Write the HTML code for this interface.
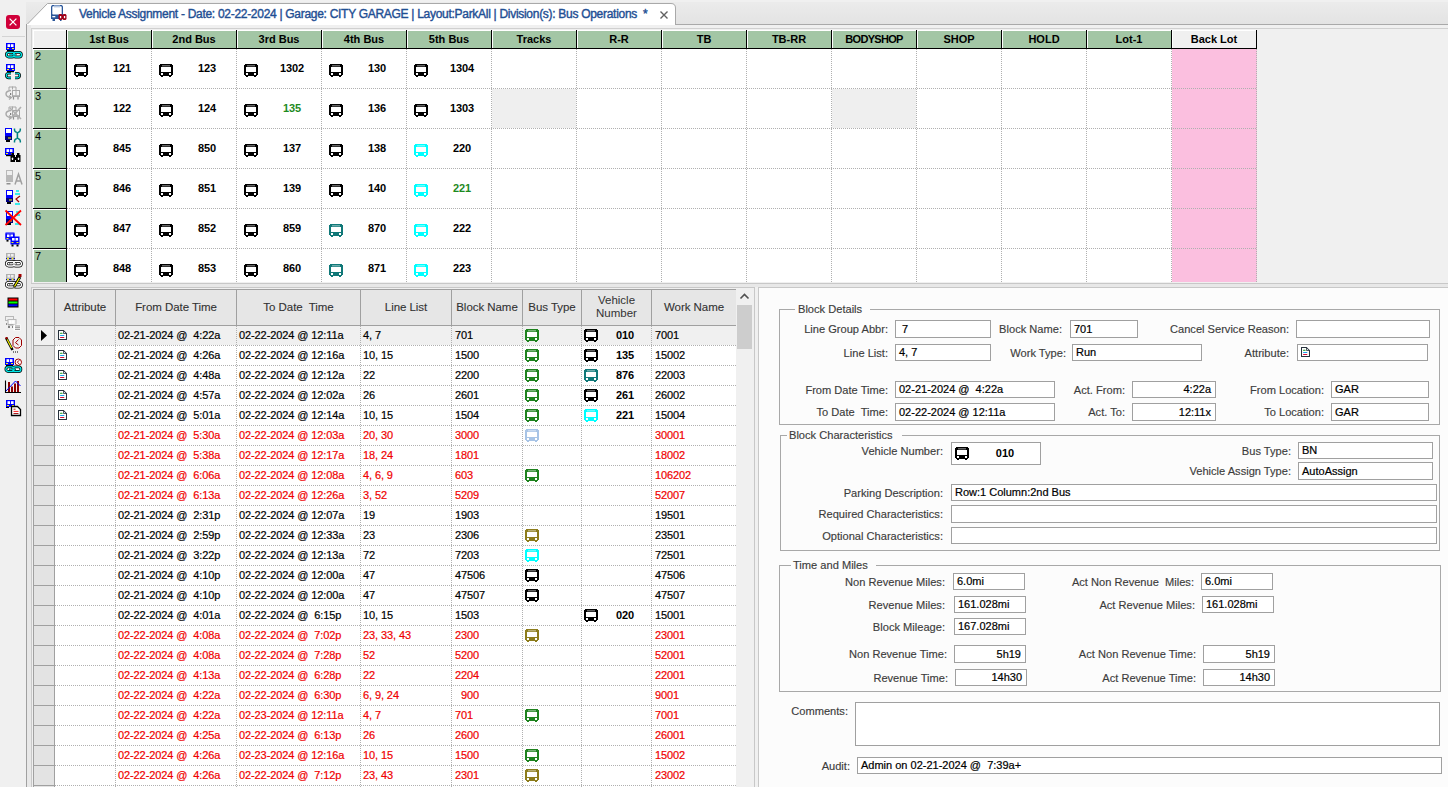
<!DOCTYPE html><html><head><meta charset="utf-8"><style>
html,body{margin:0;padding:0;width:1448px;height:787px;overflow:hidden;background:#f0f0f0}
body{position:relative;font-family:"Liberation Sans",sans-serif}
div{position:absolute}
</style></head><body>
<div style="left:0px;top:0px;width:1448px;height:787px;background:#f0f0f0"></div>
<div style="left:26px;top:0px;width:1422px;height:24px;background:linear-gradient(#ececec,#e3e3e3)"></div>
<div style="left:0px;top:0px;width:1448px;height:2px;background:#f0f0f0"></div>
<div style="left:26px;top:24px;width:1422px;height:1px;background:#a9a9a9"></div>
<svg style="position:absolute;left:0px;top:0px" width="700" height="26" viewBox="0 0 700 26"><path d="M26.5 25 L47.5 3.5 H671 Q675.5 3.5 675.5 8 V25" fill="#fff" stroke="#a9a9a9" stroke-width="1"/></svg>
<div style="left:27px;top:24px;width:648px;height:1px;background:#fff"></div>
<div style="left:26px;top:24px;width:1px;height:763px;background:#a0a0a0"></div>
<div style="left:27px;top:25px;width:4px;height:762px;background:#e8e8e8"></div>
<svg style="position:absolute;left:51px;top:5px" width="17" height="17" viewBox="0 0 17 17"><path fill="#2b579a" d="M1.2 0H10.8L12 1.2V14H0V1.2Z"/><rect x="1.3" y="1.3" width="9.4" height="8.2" rx="0.8" fill="#fff"/><rect x="3" y="0.4" width="6" height="2" fill="#b4c6e0"/><rect x="1.3" y="11" width="3" height="1.3" fill="#fff"/><rect x="1.5" y="14" width="2.5" height="2" fill="#2b579a"/><rect x="9" y="14" width="1.5" height="2" fill="#2b579a"/><path d="M8.5 9H10.5L11.5 10V14L10.5 15H8.5L7.5 14V10Z M12.5 9H14.5L15.5 10V14L14.5 15H12.5L11.5 14V10Z" fill="#a0001a"/><rect x="8.9" y="11" width="1.3" height="2.2" fill="#fff"/><rect x="12.9" y="11" width="1.3" height="2.2" fill="#fff"/></svg>
<div style="left:79px;top:4.8px;height:18px;line-height:18px;text-align:left;white-space:pre;font-size:12px;color:#1f4f94;letter-spacing:-0.29px;-webkit-text-stroke:0.4px #1f4f94">Vehicle Assignment - Date: 02-22-2024 | Garage: CITY GARAGE | Layout:ParkAll | Division(s): Bus Operations  *</div>
<svg style="position:absolute;left:659px;top:10px" width="10" height="10" viewBox="0 0 10 10"><path d="M1.5 1.5L8.5 8.5M8.5 1.5L1.5 8.5" stroke="#606060" stroke-width="1.4"/></svg>
<div style="left:6px;top:15px;width:14px;height:14px;background:#d0003a;border-radius:3px"></div>
<svg style="position:absolute;left:6px;top:15px" width="14" height="14" viewBox="0 0 14 14"><path d="M3.6 3.6L10.4 10.4M10.4 3.6L3.6 10.4" stroke="#fff" stroke-width="1.3"/></svg>
<div style="left:2px;top:36px;width:23px;height:1px;background:#d4d4d4"></div>
<svg style="position:absolute;left:5px;top:43px;overflow:visible" width="17" height="16" viewBox="0 0 17 16"><rect x="1" y="0" width="9" height="7" fill="#0000ff"/><rect x="2.5" y="1.2" width="2.6" height="2.8" fill="#fff"/><rect x="5.9" y="1.2" width="2.6" height="2.8" fill="#fff"/><rect x="2" y="5" width="2" height="1" fill="#ffff00"/><rect x="7" y="5" width="2" height="1" fill="#ffff00"/><rect x="2" y="7" width="7" height="1.2" fill="#000"/><rect x="1.4" y="9.4" width="8" height="4.6" rx="2.3" fill="#fff" stroke="#000" stroke-width="2.8"/><rect x="8.4" y="9.4" width="8" height="4.6" rx="2.3" fill="#fff" stroke="#000" stroke-width="2.8"/><rect x="1.4" y="9.4" width="8" height="4.6" rx="2.3" fill="none" stroke="#00e8e8" stroke-width="1.3"/><rect x="8.4" y="9.4" width="8" height="4.6" rx="2.3" fill="none" stroke="#00e8e8" stroke-width="1.3"/><rect x="4.5" y="11.1" width="7" height="1.3" fill="#000"/><rect x="5" y="11.2" width="6" height="1.1" fill="#00e8e8"/></svg>
<svg style="position:absolute;left:5px;top:64px;overflow:visible" width="17" height="16" viewBox="0 0 17 16"><rect x="1" y="0" width="9" height="7" fill="#0000ff"/><rect x="2.5" y="1.2" width="2.6" height="2.8" fill="#fff"/><rect x="5.9" y="1.2" width="2.6" height="2.8" fill="#fff"/><rect x="2" y="5" width="2" height="1" fill="#ffff00"/><rect x="7" y="5" width="2" height="1" fill="#ffff00"/><rect x="2" y="7" width="7" height="1.2" fill="#000"/><path d="M6 9.3H3.6A2.3 2.3 0 0 0 3.6 13.9H6M10 9.3H12.4A2.3 2.3 0 0 1 12.4 13.9H10" fill="none" stroke="#000" stroke-width="2.6"/><path d="M6 9.3H3.6A2.3 2.3 0 0 0 3.6 13.9H6M10 9.3H12.4A2.3 2.3 0 0 1 12.4 13.9H10" fill="none" stroke="#00e8e8" stroke-width="1.1"/></svg>
<svg style="position:absolute;left:5px;top:86px;overflow:visible" width="17" height="16" viewBox="0 0 17 16"><path d="M4 4V1H11V4" fill="none" stroke="#a8a8a8" stroke-width="1"/><path d="M7.5 0.5V3.5" stroke="#a8a8a8"/><rect x="7.5" y="4.5" width="7" height="5.5" fill="#f4f4f4" stroke="#a8a8a8" stroke-width="1"/><path d="M11 5V9.5" stroke="#a8a8a8"/><rect x="5" y="7" width="1.2" height="2" fill="#808080"/><rect x="7" y="9.5" width="8" height="1.5" fill="#a8a8a8"/><path d="M8.5 11V13.5M13 11V13.5" stroke="#909090" stroke-width="1.2"/><path d="M6 4.5Q1 5 1 8Q1 11 6 11.5" fill="none" stroke="#a8a8a8" stroke-width="1.4"/><path d="M4 9.5L6.5 11.5L4 13.5" fill="none" stroke="#a8a8a8" stroke-width="1.2"/></svg>
<svg style="position:absolute;left:5px;top:106px;overflow:visible" width="17" height="16" viewBox="0 0 17 16"><path d="M4 4V1H11V4" fill="none" stroke="#a8a8a8" stroke-width="1"/><path d="M7.5 0.5V3.5" stroke="#a8a8a8"/><rect x="7.5" y="4.5" width="7" height="5.5" fill="#f4f4f4" stroke="#a8a8a8" stroke-width="1"/><path d="M11 5V9.5" stroke="#a8a8a8"/><rect x="5" y="7" width="1.2" height="2" fill="#808080"/><rect x="7" y="9.5" width="8" height="1.5" fill="#a8a8a8"/><path d="M8.5 11V13.5M13 11V13.5" stroke="#909090" stroke-width="1.2"/><path d="M6 4.5Q1 5 1 8Q1 11 6 11.5" fill="none" stroke="#a8a8a8" stroke-width="1.4"/><path d="M4 9.5L6.5 11.5L4 13.5" fill="none" stroke="#a8a8a8" stroke-width="1.2"/><path d="M5 2L16 13M16 1L6 12" stroke="#b0b0b0" stroke-width="1.6"/></svg>
<svg style="position:absolute;left:5px;top:128px;overflow:visible" width="17" height="16" viewBox="0 0 17 16"><rect x="0" y="0" width="7" height="12" fill="#0000ff"/><rect x="1" y="1" width="5" height="4" fill="#fff"/><rect x="0" y="8" width="7" height="4" fill="#000080"/><rect x="3" y="9.5" width="3" height="1" fill="#ffff00"/><rect x="1" y="12" width="4" height="2" fill="#000"/><path d="M9.5 0.5V2Q9.5 3.8 11.8 4.5M15.3 0.5V2Q15.3 3.8 13 4.5M11.8 10.5Q9.5 11.2 9.5 13V14.5M13 10.5Q15.3 11.2 15.3 13V14.5" fill="none" stroke="#008080" stroke-width="1.5"/><rect x="11.6" y="4" width="1.6" height="7" fill="#008080"/></svg>
<svg style="position:absolute;left:5px;top:148px;overflow:visible" width="17" height="16" viewBox="0 0 17 16"><rect x="0" y="0" width="9" height="7" fill="#0000ff"/><rect x="1.5" y="1.2" width="2.6" height="2.8" fill="#fff"/><rect x="4.9" y="1.2" width="2.6" height="2.8" fill="#fff"/><rect x="1" y="5" width="2" height="1" fill="#ffff00"/><rect x="6" y="5" width="2" height="1" fill="#ffff00"/><rect x="1" y="7" width="7" height="1.2" fill="#000"/><path d="M6.5 5H9V7H10V9H11V7H12V5H14.5V7H15.5V14H11V12H10V14H5.5V7H6.5Z" fill="#000"/><rect x="6.8" y="9.5" width="1.4" height="2.6" rx=".7" fill="#fff"/><rect x="12.8" y="9.5" width="1.4" height="2.6" rx=".7" fill="#fff"/></svg>
<svg style="position:absolute;left:5px;top:170px;overflow:visible" width="17" height="16" viewBox="0 0 17 16"><rect x="1" y="0" width="7" height="12" fill="#b8b8b8"/><rect x="2" y="1" width="5" height="4" fill="#eee"/><rect x="1.5" y="13" width="4" height="1.5" fill="#909090"/><path d="M10 14.5L13.5 4L17 14.5M11 11H16" fill="none" stroke="#a0a0a0" stroke-width="1.5"/></svg>
<svg style="position:absolute;left:5px;top:190px;overflow:visible" width="17" height="16" viewBox="0 0 17 16"><rect x="1" y="0" width="7" height="12" fill="#0000ff"/><rect x="2" y="1" width="5" height="4" fill="#fff"/><rect x="1" y="8" width="7" height="4" fill="#000080"/><rect x="4" y="9.5" width="3" height="1" fill="#ffff00"/><rect x="2" y="12" width="4" height="2" fill="#000"/><path d="M11 1H14M10 4H15M10 14H15" stroke="#00e8e8" stroke-width="1.6"/><path d="M15 6L11 9L14 12" fill="none" stroke="#a00000" stroke-width="1.2"/></svg>
<svg style="position:absolute;left:5px;top:210px;overflow:visible" width="17" height="16" viewBox="0 0 17 16"><rect x="1" y="1" width="7" height="12" fill="#0000ff"/><rect x="2" y="2" width="5" height="4" fill="#fff"/><rect x="1" y="9" width="7" height="4" fill="#000080"/><rect x="4" y="10.5" width="3" height="1" fill="#ffff00"/><rect x="2" y="13" width="4" height="2" fill="#000"/><path d="M11 2H14M10 5H15M10 14H15" stroke="#00e8e8" stroke-width="1.6"/><path d="M0.5 0.5L16 15M16 0.5L0.5 15" stroke="#ff0000" stroke-width="1.8"/></svg>
<svg style="position:absolute;left:5px;top:233px;overflow:visible" width="17" height="16" viewBox="0 0 17 16"><rect x="1" y="0" width="8" height="6" fill="none" stroke="#0000ff" stroke-width="1"/><rect x="0.5" y="0.5" width="9" height="6" fill="#0000ff"/><rect x="2" y="1.5" width="2.5" height="2.5" fill="#fff"/><rect x="5.5" y="1.5" width="2.5" height="2.5" fill="#fff"/><rect x="1.5" y="5" width="2" height="1" fill="#ffff00"/><rect x="1.5" y="7" width="2" height="1.6" fill="#000"/><rect x="5.5" y="3.5" width="9" height="8" fill="#0000ff"/><rect x="7" y="5" width="2.6" height="2.6" fill="#fff"/><rect x="10.5" y="5" width="2.6" height="2.6" fill="#fff"/><rect x="6.5" y="9" width="2" height="1" fill="#ffff00"/><rect x="11.5" y="9" width="2" height="1" fill="#ffff00"/><rect x="6.5" y="11.5" width="2" height="2" fill="#000"/><rect x="11.5" y="11.5" width="2" height="2" fill="#000"/></svg>
<svg style="position:absolute;left:5px;top:253px;overflow:visible" width="17" height="16" viewBox="0 0 17 16"><rect x="1" y="0" width="9" height="5" fill="#b0b0b0"/><rect x="2.5" y="1" width="2.6" height="2.6" fill="#eee"/><rect x="6" y="1" width="2.6" height="2.6" fill="#eee"/><rect x="1" y="5" width="9" height="1.3" fill="#0000c0"/><rect x="2" y="5" width="2" height="1.3" fill="#ffff00"/><rect x="6.5" y="5" width="2" height="1.3" fill="#ffff00"/><rect x="1.4" y="8.4" width="8" height="4.6" rx="2.3" fill="#fff" stroke="#000" stroke-width="2.8"/><rect x="8.4" y="8.4" width="8" height="4.6" rx="2.3" fill="#fff" stroke="#000" stroke-width="2.8"/><rect x="1.4" y="8.4" width="8" height="4.6" rx="2.3" fill="none" stroke="#fff" stroke-width="1.3"/><rect x="8.4" y="8.4" width="8" height="4.6" rx="2.3" fill="none" stroke="#fff" stroke-width="1.3"/><rect x="4.5" y="10.1" width="7" height="1.3" fill="#000"/><rect x="5" y="10.2" width="6" height="1.1" fill="#fff"/></svg>
<svg style="position:absolute;left:5px;top:274px;overflow:visible" width="17" height="16" viewBox="0 0 17 16"><rect x="1" y="0" width="9" height="5" fill="#b0b0b0"/><rect x="2.5" y="1" width="2.6" height="2.6" fill="#eee"/><rect x="6" y="1" width="2.6" height="2.6" fill="#eee"/><rect x="1" y="5" width="9" height="1.3" fill="#0000c0"/><rect x="2" y="5" width="2" height="1.3" fill="#ffff00"/><rect x="6.5" y="5" width="2" height="1.3" fill="#ffff00"/><rect x="1.4" y="8.4" width="8" height="4.6" rx="2.3" fill="#fff" stroke="#000" stroke-width="2.8"/><rect x="8.4" y="8.4" width="8" height="4.6" rx="2.3" fill="#fff" stroke="#000" stroke-width="2.8"/><rect x="1.4" y="8.4" width="8" height="4.6" rx="2.3" fill="none" stroke="#fff" stroke-width="1.3"/><rect x="8.4" y="8.4" width="8" height="4.6" rx="2.3" fill="none" stroke="#fff" stroke-width="1.3"/><rect x="4.5" y="10.1" width="7" height="1.3" fill="#000"/><rect x="5" y="10.2" width="6" height="1.1" fill="#fff"/><path d="M9 13L15 3" stroke="#000" stroke-width="2.8"/><path d="M9.5 12.5L14.5 4" stroke="#ffff00" stroke-width="1.2"/><rect x="13.5" y="0" width="3" height="3" fill="#a00000"/></svg>
<svg style="position:absolute;left:5px;top:297px;overflow:visible" width="17" height="16" viewBox="0 0 17 16"><rect x="2.5" y="0.5" width="11" height="10" fill="#000"/><rect x="3.5" y="1.5" width="9" height="2" fill="#ff0000"/><rect x="3.5" y="4.5" width="9" height="2" fill="#00ff00"/><rect x="3.5" y="7.3" width="9" height="2" fill="#0000ff"/></svg>
<svg style="position:absolute;left:5px;top:316px;overflow:visible" width="17" height="16" viewBox="0 0 17 16"><rect x="0.5" y="0.5" width="8" height="4" fill="none" stroke="#b8b8b8"/><rect x="3" y="3.5" width="8" height="5" fill="#f0f0f0" stroke="#b8b8b8"/><rect x="4" y="4.5" width="2.5" height="3" fill="#fff"/><rect x="7" y="4.5" width="2.5" height="3" fill="#fff"/><rect x="1" y="7" width="1" height="2" fill="#909090"/><rect x="3" y="8.5" width="8" height="1" fill="#a0a0a0"/><rect x="3" y="10" width="2" height="2" fill="#808080"/><rect x="7" y="10" width="1" height="2" fill="#808080"/><rect x="8.5" y="8.5" width="7" height="6" fill="#fff"/><path d="M10 10H15M10 11.7H15M10 13.4H15" stroke="#909090" stroke-width="1"/></svg>
<svg style="position:absolute;left:5px;top:337px;overflow:visible" width="17" height="16" viewBox="0 0 17 16"><path d="M10.5 0.5H14L16.5 3V8.5L14 11H10.5L8 8.5V3Z" fill="none" stroke="#a00000" stroke-width="1"/><path d="M13.5 2.5L10.5 5.7L13.5 8" fill="none" stroke="#a00000" stroke-width="1"/><path d="M1.2 0.8L7.5 13" stroke="#000" stroke-width="2.6"/><path d="M2.2 2.5L6.6 11" stroke="#ffff00" stroke-width="1.1"/><rect x="0.5" y="0" width="2" height="2" fill="#a00000"/><rect x="8" y="14.5" width="1" height="1" fill="#000"/><rect x="10" y="14.5" width="1" height="1" fill="#000"/><rect x="12" y="14.5" width="1" height="1" fill="#000"/></svg>
<svg style="position:absolute;left:5px;top:358px;overflow:visible" width="17" height="16" viewBox="0 0 17 16"><rect x="0" y="0" width="9" height="7" fill="#0000ff"/><rect x="1.5" y="1.2" width="2.6" height="2.8" fill="#fff"/><rect x="4.9" y="1.2" width="2.6" height="2.8" fill="#fff"/><rect x="1" y="5" width="2" height="1" fill="#ffff00"/><rect x="6" y="5" width="2" height="1" fill="#ffff00"/><rect x="1" y="7" width="7" height="1.2" fill="#000"/><circle cx="13.3" cy="4.2" r="3.2" fill="#fff" stroke="#a00000" stroke-width="1"/><path d="M14.3 2.2L12.3 4.2L14.6 6.3" fill="none" stroke="#a00000"/><rect x="0.8999999999999999" y="8.9" width="8" height="4.6" rx="2.3" fill="#fff" stroke="#000" stroke-width="2.8"/><rect x="7.9" y="8.9" width="8" height="4.6" rx="2.3" fill="#fff" stroke="#000" stroke-width="2.8"/><rect x="0.8999999999999999" y="8.9" width="8" height="4.6" rx="2.3" fill="none" stroke="#00e8e8" stroke-width="1.3"/><rect x="7.9" y="8.9" width="8" height="4.6" rx="2.3" fill="none" stroke="#00e8e8" stroke-width="1.3"/><rect x="4.0" y="10.6" width="7" height="1.3" fill="#000"/><rect x="4.5" y="10.7" width="6" height="1.1" fill="#00e8e8"/></svg>
<svg style="position:absolute;left:5px;top:380px;overflow:visible" width="17" height="16" viewBox="0 0 17 16"><path d="M0.5 0.5V12.5H16" fill="none" stroke="#000" stroke-width="1.1"/><rect x="3" y="2" width="2" height="10" fill="#8b0000"/><rect x="6" y="6.5" width="2" height="5.5" fill="#8b0000"/><rect x="9" y="3.5" width="2" height="8.5" fill="#8b0000"/><rect x="12" y="1" width="2" height="11" fill="#8b0000"/><path d="M1 11L10.5 1L15.5 6" fill="none" stroke="#0000ff" stroke-width="1"/></svg>
<svg style="position:absolute;left:5px;top:400px;overflow:visible" width="17" height="16" viewBox="0 0 17 16"><rect x="1" y="0" width="9" height="7" fill="#0000ff"/><rect x="2.5" y="1.2" width="2.6" height="2.8" fill="#fff"/><rect x="6" y="1.2" width="2.6" height="2.8" fill="#fff"/><rect x="2" y="5" width="2" height="1" fill="#ffff00"/><rect x="7" y="5" width="2" height="1" fill="#ffff00"/><rect x="1" y="7" width="3" height="1" fill="#000"/><path d="M6.5 6.5H12.5L15.5 9.5V15.5H6.5Z" fill="#fff" stroke="#000" stroke-width="1.3"/><path d="M8.5 9.2H10.5" stroke="#a00000" stroke-width=".9"/><path d="M8.5 11.4H13.5" stroke="#ff0000" stroke-width=".9"/><path d="M8.5 13.5H13.5" stroke="#a00000" stroke-width=".9"/></svg>
<div style="left:31px;top:28px;width:1417px;height:1px;background:#d0d0d0"></div>
<div style="left:31px;top:28px;width:1px;height:255px;background:#d0d0d0"></div>
<div style="left:32px;top:29px;width:1416px;height:254px;background:#f0f0f0"></div>
<div style="left:33px;top:30px;width:33px;height:18px;background:#f0f0f0;border-top:1px solid #fff;border-left:1px solid #fff;box-sizing:border-box"></div>
<div style="left:33px;top:48px;width:1224px;height:1px;background:#000"></div>
<div style="left:66px;top:30px;width:1px;height:252px;background:#000"></div>
<div style="left:67px;top:30px;width:84px;height:18px;background:#a3c6a5;border-top:1px solid #fff;border-left:1px solid #fff;box-sizing:border-box"></div>
<div style="left:151px;top:30px;width:1px;height:18px;background:#000"></div>
<div style="left:67px;top:30px;width:84px;height:19px;line-height:19px;text-align:center;white-space:pre;font-size:11px;font-weight:bold;color:#000;letter-spacing:0">1st Bus</div>
<div style="left:152px;top:30px;width:84px;height:18px;background:#a3c6a5;border-top:1px solid #fff;border-left:1px solid #fff;box-sizing:border-box"></div>
<div style="left:236px;top:30px;width:1px;height:18px;background:#000"></div>
<div style="left:152px;top:30px;width:84px;height:19px;line-height:19px;text-align:center;white-space:pre;font-size:11px;font-weight:bold;color:#000;letter-spacing:0">2nd Bus</div>
<div style="left:237px;top:30px;width:84px;height:18px;background:#a3c6a5;border-top:1px solid #fff;border-left:1px solid #fff;box-sizing:border-box"></div>
<div style="left:321px;top:30px;width:1px;height:18px;background:#000"></div>
<div style="left:237px;top:30px;width:84px;height:19px;line-height:19px;text-align:center;white-space:pre;font-size:11px;font-weight:bold;color:#000;letter-spacing:0">3rd Bus</div>
<div style="left:322px;top:30px;width:84px;height:18px;background:#a3c6a5;border-top:1px solid #fff;border-left:1px solid #fff;box-sizing:border-box"></div>
<div style="left:406px;top:30px;width:1px;height:18px;background:#000"></div>
<div style="left:322px;top:30px;width:84px;height:19px;line-height:19px;text-align:center;white-space:pre;font-size:11px;font-weight:bold;color:#000;letter-spacing:0">4th Bus</div>
<div style="left:407px;top:30px;width:84px;height:18px;background:#a3c6a5;border-top:1px solid #fff;border-left:1px solid #fff;box-sizing:border-box"></div>
<div style="left:491px;top:30px;width:1px;height:18px;background:#000"></div>
<div style="left:407px;top:30px;width:84px;height:19px;line-height:19px;text-align:center;white-space:pre;font-size:11px;font-weight:bold;color:#000;letter-spacing:0">5th Bus</div>
<div style="left:492px;top:30px;width:84px;height:18px;background:#a3c6a5;border-top:1px solid #fff;border-left:1px solid #fff;box-sizing:border-box"></div>
<div style="left:576px;top:30px;width:1px;height:18px;background:#000"></div>
<div style="left:492px;top:30px;width:84px;height:19px;line-height:19px;text-align:center;white-space:pre;font-size:11px;font-weight:bold;color:#000;letter-spacing:0">Tracks</div>
<div style="left:577px;top:30px;width:84px;height:18px;background:#a3c6a5;border-top:1px solid #fff;border-left:1px solid #fff;box-sizing:border-box"></div>
<div style="left:661px;top:30px;width:1px;height:18px;background:#000"></div>
<div style="left:577px;top:30px;width:84px;height:19px;line-height:19px;text-align:center;white-space:pre;font-size:11px;font-weight:bold;color:#000;letter-spacing:0">R-R</div>
<div style="left:662px;top:30px;width:84px;height:18px;background:#a3c6a5;border-top:1px solid #fff;border-left:1px solid #fff;box-sizing:border-box"></div>
<div style="left:746px;top:30px;width:1px;height:18px;background:#000"></div>
<div style="left:662px;top:30px;width:84px;height:19px;line-height:19px;text-align:center;white-space:pre;font-size:11px;font-weight:bold;color:#000;letter-spacing:0">TB</div>
<div style="left:747px;top:30px;width:84px;height:18px;background:#a3c6a5;border-top:1px solid #fff;border-left:1px solid #fff;box-sizing:border-box"></div>
<div style="left:831px;top:30px;width:1px;height:18px;background:#000"></div>
<div style="left:747px;top:30px;width:84px;height:19px;line-height:19px;text-align:center;white-space:pre;font-size:11px;font-weight:bold;color:#000;letter-spacing:0">TB-RR</div>
<div style="left:832px;top:30px;width:84px;height:18px;background:#a3c6a5;border-top:1px solid #fff;border-left:1px solid #fff;box-sizing:border-box"></div>
<div style="left:916px;top:30px;width:1px;height:18px;background:#000"></div>
<div style="left:832px;top:30px;width:84px;height:19px;line-height:19px;text-align:center;white-space:pre;font-size:11px;font-weight:bold;color:#000;letter-spacing:-0.7px">BODYSHOP</div>
<div style="left:917px;top:30px;width:84px;height:18px;background:#a3c6a5;border-top:1px solid #fff;border-left:1px solid #fff;box-sizing:border-box"></div>
<div style="left:1001px;top:30px;width:1px;height:18px;background:#000"></div>
<div style="left:917px;top:30px;width:84px;height:19px;line-height:19px;text-align:center;white-space:pre;font-size:11px;font-weight:bold;color:#000;letter-spacing:0">SHOP</div>
<div style="left:1002px;top:30px;width:84px;height:18px;background:#a3c6a5;border-top:1px solid #fff;border-left:1px solid #fff;box-sizing:border-box"></div>
<div style="left:1086px;top:30px;width:1px;height:18px;background:#000"></div>
<div style="left:1002px;top:30px;width:84px;height:19px;line-height:19px;text-align:center;white-space:pre;font-size:11px;font-weight:bold;color:#000;letter-spacing:0">HOLD</div>
<div style="left:1087px;top:30px;width:84px;height:18px;background:#a3c6a5;border-top:1px solid #fff;border-left:1px solid #fff;box-sizing:border-box"></div>
<div style="left:1171px;top:30px;width:1px;height:18px;background:#000"></div>
<div style="left:1087px;top:30px;width:84px;height:19px;line-height:19px;text-align:center;white-space:pre;font-size:11px;font-weight:bold;color:#000;letter-spacing:0">Lot-1</div>
<div style="left:1172px;top:30px;width:84px;height:18px;background:#f0f0f0;border-top:1px solid #fff;border-left:1px solid #fff;box-sizing:border-box"></div>
<div style="left:1256px;top:30px;width:1px;height:18px;background:#000"></div>
<div style="left:1172px;top:30px;width:84px;height:19px;line-height:19px;text-align:center;white-space:pre;font-size:11px;font-weight:bold;color:#000;letter-spacing:0">Back Lot</div>
<div style="left:33px;top:49px;width:33px;height:39px;background:#a3c6a5;border-top:1px solid #fff;border-left:1px solid #fff;box-sizing:border-box"></div>
<div style="left:33px;top:88px;width:33px;height:1px;background:#000"></div>
<div style="left:35px;top:50px;height:12px;line-height:12px;text-align:left;white-space:pre;font-size:11px;color:#000">2</div>
<div style="left:67px;top:49px;width:1105px;height:40px;background:#fff"></div>
<div style="left:1172px;top:49px;width:85px;height:40px;background:#fbbfdf"></div>
<div style="left:67px;top:88px;width:1190px;height:1px;background:repeating-linear-gradient(90deg,#b0b0b0 0 1px,transparent 1px 2px)"></div>
<svg style="position:absolute;left:74px;top:64px" width="14" height="13" viewBox="0 0 14 13"><path fill="#000" d="M1 0H13V1H14V11H13V12H12V13H10V12H4V13H2V12H1V11H0V1H1Z"/><rect x="2" y="3" width="10" height="5" fill="#fff"/><rect x="3" y="1.4" width="8" height="0.9" fill="#fff" opacity=".65"/><rect x="2" y="9" width="2" height="2" fill="#fff"/><rect x="10" y="9" width="2" height="2" fill="#fff"/></svg>
<div style="left:90px;top:60px;width:64px;height:16px;line-height:16px;text-align:center;white-space:pre;font-size:11px;font-weight:bold;color:#000;letter-spacing:-0.1px">121</div>
<svg style="position:absolute;left:159px;top:64px" width="14" height="13" viewBox="0 0 14 13"><path fill="#000" d="M1 0H13V1H14V11H13V12H12V13H10V12H4V13H2V12H1V11H0V1H1Z"/><rect x="2" y="3" width="10" height="5" fill="#fff"/><rect x="3" y="1.4" width="8" height="0.9" fill="#fff" opacity=".65"/><rect x="2" y="9" width="2" height="2" fill="#fff"/><rect x="10" y="9" width="2" height="2" fill="#fff"/></svg>
<div style="left:175px;top:60px;width:64px;height:16px;line-height:16px;text-align:center;white-space:pre;font-size:11px;font-weight:bold;color:#000;letter-spacing:-0.1px">123</div>
<svg style="position:absolute;left:244px;top:64px" width="14" height="13" viewBox="0 0 14 13"><path fill="#000" d="M1 0H13V1H14V11H13V12H12V13H10V12H4V13H2V12H1V11H0V1H1Z"/><rect x="2" y="3" width="10" height="5" fill="#fff"/><rect x="3" y="1.4" width="8" height="0.9" fill="#fff" opacity=".65"/><rect x="2" y="9" width="2" height="2" fill="#fff"/><rect x="10" y="9" width="2" height="2" fill="#fff"/></svg>
<div style="left:260px;top:60px;width:64px;height:16px;line-height:16px;text-align:center;white-space:pre;font-size:11px;font-weight:bold;color:#000;letter-spacing:-0.1px">1302</div>
<svg style="position:absolute;left:329px;top:64px" width="14" height="13" viewBox="0 0 14 13"><path fill="#000" d="M1 0H13V1H14V11H13V12H12V13H10V12H4V13H2V12H1V11H0V1H1Z"/><rect x="2" y="3" width="10" height="5" fill="#fff"/><rect x="3" y="1.4" width="8" height="0.9" fill="#fff" opacity=".65"/><rect x="2" y="9" width="2" height="2" fill="#fff"/><rect x="10" y="9" width="2" height="2" fill="#fff"/></svg>
<div style="left:345px;top:60px;width:64px;height:16px;line-height:16px;text-align:center;white-space:pre;font-size:11px;font-weight:bold;color:#000;letter-spacing:-0.1px">130</div>
<svg style="position:absolute;left:414px;top:64px" width="14" height="13" viewBox="0 0 14 13"><path fill="#000" d="M1 0H13V1H14V11H13V12H12V13H10V12H4V13H2V12H1V11H0V1H1Z"/><rect x="2" y="3" width="10" height="5" fill="#fff"/><rect x="3" y="1.4" width="8" height="0.9" fill="#fff" opacity=".65"/><rect x="2" y="9" width="2" height="2" fill="#fff"/><rect x="10" y="9" width="2" height="2" fill="#fff"/></svg>
<div style="left:430px;top:60px;width:64px;height:16px;line-height:16px;text-align:center;white-space:pre;font-size:11px;font-weight:bold;color:#000;letter-spacing:-0.1px">1304</div>
<div style="left:33px;top:89px;width:33px;height:39px;background:#a3c6a5;border-top:1px solid #fff;border-left:1px solid #fff;box-sizing:border-box"></div>
<div style="left:33px;top:128px;width:33px;height:1px;background:#000"></div>
<div style="left:35px;top:90px;height:12px;line-height:12px;text-align:left;white-space:pre;font-size:11px;color:#000">3</div>
<div style="left:67px;top:89px;width:1105px;height:40px;background:#fff"></div>
<div style="left:1172px;top:89px;width:85px;height:40px;background:#fbbfdf"></div>
<div style="left:492px;top:89px;width:84px;height:39px;background:#efefef"></div>
<div style="left:832px;top:89px;width:84px;height:39px;background:#efefef"></div>
<div style="left:67px;top:128px;width:1190px;height:1px;background:repeating-linear-gradient(90deg,#b0b0b0 0 1px,transparent 1px 2px)"></div>
<svg style="position:absolute;left:74px;top:104px" width="14" height="13" viewBox="0 0 14 13"><path fill="#000" d="M1 0H13V1H14V11H13V12H12V13H10V12H4V13H2V12H1V11H0V1H1Z"/><rect x="2" y="3" width="10" height="5" fill="#fff"/><rect x="3" y="1.4" width="8" height="0.9" fill="#fff" opacity=".65"/><rect x="2" y="9" width="2" height="2" fill="#fff"/><rect x="10" y="9" width="2" height="2" fill="#fff"/></svg>
<div style="left:90px;top:100px;width:64px;height:16px;line-height:16px;text-align:center;white-space:pre;font-size:11px;font-weight:bold;color:#000;letter-spacing:-0.1px">122</div>
<svg style="position:absolute;left:159px;top:104px" width="14" height="13" viewBox="0 0 14 13"><path fill="#000" d="M1 0H13V1H14V11H13V12H12V13H10V12H4V13H2V12H1V11H0V1H1Z"/><rect x="2" y="3" width="10" height="5" fill="#fff"/><rect x="3" y="1.4" width="8" height="0.9" fill="#fff" opacity=".65"/><rect x="2" y="9" width="2" height="2" fill="#fff"/><rect x="10" y="9" width="2" height="2" fill="#fff"/></svg>
<div style="left:175px;top:100px;width:64px;height:16px;line-height:16px;text-align:center;white-space:pre;font-size:11px;font-weight:bold;color:#000;letter-spacing:-0.1px">124</div>
<svg style="position:absolute;left:244px;top:104px" width="14" height="13" viewBox="0 0 14 13"><path fill="#000" d="M1 0H13V1H14V11H13V12H12V13H10V12H4V13H2V12H1V11H0V1H1Z"/><rect x="2" y="3" width="10" height="5" fill="#fff"/><rect x="3" y="1.4" width="8" height="0.9" fill="#fff" opacity=".65"/><rect x="2" y="9" width="2" height="2" fill="#fff"/><rect x="10" y="9" width="2" height="2" fill="#fff"/></svg>
<div style="left:260px;top:100px;width:64px;height:16px;line-height:16px;text-align:center;white-space:pre;font-size:11px;font-weight:bold;color:#1e8a1e;letter-spacing:-0.1px">135</div>
<svg style="position:absolute;left:329px;top:104px" width="14" height="13" viewBox="0 0 14 13"><path fill="#000" d="M1 0H13V1H14V11H13V12H12V13H10V12H4V13H2V12H1V11H0V1H1Z"/><rect x="2" y="3" width="10" height="5" fill="#fff"/><rect x="3" y="1.4" width="8" height="0.9" fill="#fff" opacity=".65"/><rect x="2" y="9" width="2" height="2" fill="#fff"/><rect x="10" y="9" width="2" height="2" fill="#fff"/></svg>
<div style="left:345px;top:100px;width:64px;height:16px;line-height:16px;text-align:center;white-space:pre;font-size:11px;font-weight:bold;color:#000;letter-spacing:-0.1px">136</div>
<svg style="position:absolute;left:414px;top:104px" width="14" height="13" viewBox="0 0 14 13"><path fill="#000" d="M1 0H13V1H14V11H13V12H12V13H10V12H4V13H2V12H1V11H0V1H1Z"/><rect x="2" y="3" width="10" height="5" fill="#fff"/><rect x="3" y="1.4" width="8" height="0.9" fill="#fff" opacity=".65"/><rect x="2" y="9" width="2" height="2" fill="#fff"/><rect x="10" y="9" width="2" height="2" fill="#fff"/></svg>
<div style="left:430px;top:100px;width:64px;height:16px;line-height:16px;text-align:center;white-space:pre;font-size:11px;font-weight:bold;color:#000;letter-spacing:-0.1px">1303</div>
<div style="left:33px;top:129px;width:33px;height:39px;background:#a3c6a5;border-top:1px solid #fff;border-left:1px solid #fff;box-sizing:border-box"></div>
<div style="left:33px;top:168px;width:33px;height:1px;background:#000"></div>
<div style="left:35px;top:130px;height:12px;line-height:12px;text-align:left;white-space:pre;font-size:11px;color:#000">4</div>
<div style="left:67px;top:129px;width:1105px;height:40px;background:#fff"></div>
<div style="left:1172px;top:129px;width:85px;height:40px;background:#fbbfdf"></div>
<div style="left:67px;top:168px;width:1190px;height:1px;background:repeating-linear-gradient(90deg,#b0b0b0 0 1px,transparent 1px 2px)"></div>
<svg style="position:absolute;left:74px;top:144px" width="14" height="13" viewBox="0 0 14 13"><path fill="#000" d="M1 0H13V1H14V11H13V12H12V13H10V12H4V13H2V12H1V11H0V1H1Z"/><rect x="2" y="3" width="10" height="5" fill="#fff"/><rect x="3" y="1.4" width="8" height="0.9" fill="#fff" opacity=".65"/><rect x="2" y="9" width="2" height="2" fill="#fff"/><rect x="10" y="9" width="2" height="2" fill="#fff"/></svg>
<div style="left:90px;top:140px;width:64px;height:16px;line-height:16px;text-align:center;white-space:pre;font-size:11px;font-weight:bold;color:#000;letter-spacing:-0.1px">845</div>
<svg style="position:absolute;left:159px;top:144px" width="14" height="13" viewBox="0 0 14 13"><path fill="#000" d="M1 0H13V1H14V11H13V12H12V13H10V12H4V13H2V12H1V11H0V1H1Z"/><rect x="2" y="3" width="10" height="5" fill="#fff"/><rect x="3" y="1.4" width="8" height="0.9" fill="#fff" opacity=".65"/><rect x="2" y="9" width="2" height="2" fill="#fff"/><rect x="10" y="9" width="2" height="2" fill="#fff"/></svg>
<div style="left:175px;top:140px;width:64px;height:16px;line-height:16px;text-align:center;white-space:pre;font-size:11px;font-weight:bold;color:#000;letter-spacing:-0.1px">850</div>
<svg style="position:absolute;left:244px;top:144px" width="14" height="13" viewBox="0 0 14 13"><path fill="#000" d="M1 0H13V1H14V11H13V12H12V13H10V12H4V13H2V12H1V11H0V1H1Z"/><rect x="2" y="3" width="10" height="5" fill="#fff"/><rect x="3" y="1.4" width="8" height="0.9" fill="#fff" opacity=".65"/><rect x="2" y="9" width="2" height="2" fill="#fff"/><rect x="10" y="9" width="2" height="2" fill="#fff"/></svg>
<div style="left:260px;top:140px;width:64px;height:16px;line-height:16px;text-align:center;white-space:pre;font-size:11px;font-weight:bold;color:#000;letter-spacing:-0.1px">137</div>
<svg style="position:absolute;left:329px;top:144px" width="14" height="13" viewBox="0 0 14 13"><path fill="#000" d="M1 0H13V1H14V11H13V12H12V13H10V12H4V13H2V12H1V11H0V1H1Z"/><rect x="2" y="3" width="10" height="5" fill="#fff"/><rect x="3" y="1.4" width="8" height="0.9" fill="#fff" opacity=".65"/><rect x="2" y="9" width="2" height="2" fill="#fff"/><rect x="10" y="9" width="2" height="2" fill="#fff"/></svg>
<div style="left:345px;top:140px;width:64px;height:16px;line-height:16px;text-align:center;white-space:pre;font-size:11px;font-weight:bold;color:#000;letter-spacing:-0.1px">138</div>
<svg style="position:absolute;left:414px;top:144px" width="14" height="13" viewBox="0 0 14 13"><path fill="#00ffff" d="M1 0H13V1H14V11H13V12H12V13H10V12H4V13H2V12H1V11H0V1H1Z"/><rect x="2" y="3" width="10" height="5" fill="#fff"/><rect x="3" y="1.4" width="8" height="0.9" fill="#fff" opacity=".65"/><rect x="2" y="9" width="2" height="2" fill="#fff"/><rect x="10" y="9" width="2" height="2" fill="#fff"/></svg>
<div style="left:430px;top:140px;width:64px;height:16px;line-height:16px;text-align:center;white-space:pre;font-size:11px;font-weight:bold;color:#000;letter-spacing:-0.1px">220</div>
<div style="left:33px;top:169px;width:33px;height:39px;background:#a3c6a5;border-top:1px solid #fff;border-left:1px solid #fff;box-sizing:border-box"></div>
<div style="left:33px;top:208px;width:33px;height:1px;background:#000"></div>
<div style="left:35px;top:170px;height:12px;line-height:12px;text-align:left;white-space:pre;font-size:11px;color:#000">5</div>
<div style="left:67px;top:169px;width:1105px;height:40px;background:#fff"></div>
<div style="left:1172px;top:169px;width:85px;height:40px;background:#fbbfdf"></div>
<div style="left:67px;top:208px;width:1190px;height:1px;background:repeating-linear-gradient(90deg,#b0b0b0 0 1px,transparent 1px 2px)"></div>
<svg style="position:absolute;left:74px;top:184px" width="14" height="13" viewBox="0 0 14 13"><path fill="#000" d="M1 0H13V1H14V11H13V12H12V13H10V12H4V13H2V12H1V11H0V1H1Z"/><rect x="2" y="3" width="10" height="5" fill="#fff"/><rect x="3" y="1.4" width="8" height="0.9" fill="#fff" opacity=".65"/><rect x="2" y="9" width="2" height="2" fill="#fff"/><rect x="10" y="9" width="2" height="2" fill="#fff"/></svg>
<div style="left:90px;top:180px;width:64px;height:16px;line-height:16px;text-align:center;white-space:pre;font-size:11px;font-weight:bold;color:#000;letter-spacing:-0.1px">846</div>
<svg style="position:absolute;left:159px;top:184px" width="14" height="13" viewBox="0 0 14 13"><path fill="#000" d="M1 0H13V1H14V11H13V12H12V13H10V12H4V13H2V12H1V11H0V1H1Z"/><rect x="2" y="3" width="10" height="5" fill="#fff"/><rect x="3" y="1.4" width="8" height="0.9" fill="#fff" opacity=".65"/><rect x="2" y="9" width="2" height="2" fill="#fff"/><rect x="10" y="9" width="2" height="2" fill="#fff"/></svg>
<div style="left:175px;top:180px;width:64px;height:16px;line-height:16px;text-align:center;white-space:pre;font-size:11px;font-weight:bold;color:#000;letter-spacing:-0.1px">851</div>
<svg style="position:absolute;left:244px;top:184px" width="14" height="13" viewBox="0 0 14 13"><path fill="#000" d="M1 0H13V1H14V11H13V12H12V13H10V12H4V13H2V12H1V11H0V1H1Z"/><rect x="2" y="3" width="10" height="5" fill="#fff"/><rect x="3" y="1.4" width="8" height="0.9" fill="#fff" opacity=".65"/><rect x="2" y="9" width="2" height="2" fill="#fff"/><rect x="10" y="9" width="2" height="2" fill="#fff"/></svg>
<div style="left:260px;top:180px;width:64px;height:16px;line-height:16px;text-align:center;white-space:pre;font-size:11px;font-weight:bold;color:#000;letter-spacing:-0.1px">139</div>
<svg style="position:absolute;left:329px;top:184px" width="14" height="13" viewBox="0 0 14 13"><path fill="#000" d="M1 0H13V1H14V11H13V12H12V13H10V12H4V13H2V12H1V11H0V1H1Z"/><rect x="2" y="3" width="10" height="5" fill="#fff"/><rect x="3" y="1.4" width="8" height="0.9" fill="#fff" opacity=".65"/><rect x="2" y="9" width="2" height="2" fill="#fff"/><rect x="10" y="9" width="2" height="2" fill="#fff"/></svg>
<div style="left:345px;top:180px;width:64px;height:16px;line-height:16px;text-align:center;white-space:pre;font-size:11px;font-weight:bold;color:#000;letter-spacing:-0.1px">140</div>
<svg style="position:absolute;left:414px;top:184px" width="14" height="13" viewBox="0 0 14 13"><path fill="#00ffff" d="M1 0H13V1H14V11H13V12H12V13H10V12H4V13H2V12H1V11H0V1H1Z"/><rect x="2" y="3" width="10" height="5" fill="#fff"/><rect x="3" y="1.4" width="8" height="0.9" fill="#fff" opacity=".65"/><rect x="2" y="9" width="2" height="2" fill="#fff"/><rect x="10" y="9" width="2" height="2" fill="#fff"/></svg>
<div style="left:430px;top:180px;width:64px;height:16px;line-height:16px;text-align:center;white-space:pre;font-size:11px;font-weight:bold;color:#1e8a1e;letter-spacing:-0.1px">221</div>
<div style="left:33px;top:209px;width:33px;height:39px;background:#a3c6a5;border-top:1px solid #fff;border-left:1px solid #fff;box-sizing:border-box"></div>
<div style="left:33px;top:248px;width:33px;height:1px;background:#000"></div>
<div style="left:35px;top:210px;height:12px;line-height:12px;text-align:left;white-space:pre;font-size:11px;color:#000">6</div>
<div style="left:67px;top:209px;width:1105px;height:40px;background:#fff"></div>
<div style="left:1172px;top:209px;width:85px;height:40px;background:#fbbfdf"></div>
<div style="left:67px;top:248px;width:1190px;height:1px;background:repeating-linear-gradient(90deg,#b0b0b0 0 1px,transparent 1px 2px)"></div>
<svg style="position:absolute;left:74px;top:224px" width="14" height="13" viewBox="0 0 14 13"><path fill="#000" d="M1 0H13V1H14V11H13V12H12V13H10V12H4V13H2V12H1V11H0V1H1Z"/><rect x="2" y="3" width="10" height="5" fill="#fff"/><rect x="3" y="1.4" width="8" height="0.9" fill="#fff" opacity=".65"/><rect x="2" y="9" width="2" height="2" fill="#fff"/><rect x="10" y="9" width="2" height="2" fill="#fff"/></svg>
<div style="left:90px;top:220px;width:64px;height:16px;line-height:16px;text-align:center;white-space:pre;font-size:11px;font-weight:bold;color:#000;letter-spacing:-0.1px">847</div>
<svg style="position:absolute;left:159px;top:224px" width="14" height="13" viewBox="0 0 14 13"><path fill="#000" d="M1 0H13V1H14V11H13V12H12V13H10V12H4V13H2V12H1V11H0V1H1Z"/><rect x="2" y="3" width="10" height="5" fill="#fff"/><rect x="3" y="1.4" width="8" height="0.9" fill="#fff" opacity=".65"/><rect x="2" y="9" width="2" height="2" fill="#fff"/><rect x="10" y="9" width="2" height="2" fill="#fff"/></svg>
<div style="left:175px;top:220px;width:64px;height:16px;line-height:16px;text-align:center;white-space:pre;font-size:11px;font-weight:bold;color:#000;letter-spacing:-0.1px">852</div>
<svg style="position:absolute;left:244px;top:224px" width="14" height="13" viewBox="0 0 14 13"><path fill="#000" d="M1 0H13V1H14V11H13V12H12V13H10V12H4V13H2V12H1V11H0V1H1Z"/><rect x="2" y="3" width="10" height="5" fill="#fff"/><rect x="3" y="1.4" width="8" height="0.9" fill="#fff" opacity=".65"/><rect x="2" y="9" width="2" height="2" fill="#fff"/><rect x="10" y="9" width="2" height="2" fill="#fff"/></svg>
<div style="left:260px;top:220px;width:64px;height:16px;line-height:16px;text-align:center;white-space:pre;font-size:11px;font-weight:bold;color:#000;letter-spacing:-0.1px">859</div>
<svg style="position:absolute;left:329px;top:224px" width="14" height="13" viewBox="0 0 14 13"><path fill="#107878" d="M1 0H13V1H14V11H13V12H12V13H10V12H4V13H2V12H1V11H0V1H1Z"/><rect x="2" y="3" width="10" height="5" fill="#fff"/><rect x="3" y="1.4" width="8" height="0.9" fill="#fff" opacity=".65"/><rect x="2" y="9" width="2" height="2" fill="#fff"/><rect x="10" y="9" width="2" height="2" fill="#fff"/></svg>
<div style="left:345px;top:220px;width:64px;height:16px;line-height:16px;text-align:center;white-space:pre;font-size:11px;font-weight:bold;color:#000;letter-spacing:-0.1px">870</div>
<svg style="position:absolute;left:414px;top:224px" width="14" height="13" viewBox="0 0 14 13"><path fill="#00ffff" d="M1 0H13V1H14V11H13V12H12V13H10V12H4V13H2V12H1V11H0V1H1Z"/><rect x="2" y="3" width="10" height="5" fill="#fff"/><rect x="3" y="1.4" width="8" height="0.9" fill="#fff" opacity=".65"/><rect x="2" y="9" width="2" height="2" fill="#fff"/><rect x="10" y="9" width="2" height="2" fill="#fff"/></svg>
<div style="left:430px;top:220px;width:64px;height:16px;line-height:16px;text-align:center;white-space:pre;font-size:11px;font-weight:bold;color:#000;letter-spacing:-0.1px">222</div>
<div style="left:33px;top:249px;width:33px;height:33px;background:#a3c6a5;border-top:1px solid #fff;border-left:1px solid #fff;box-sizing:border-box"></div>
<div style="left:35px;top:250px;height:12px;line-height:12px;text-align:left;white-space:pre;font-size:11px;color:#000">7</div>
<div style="left:67px;top:249px;width:1105px;height:33px;background:#fff"></div>
<div style="left:1172px;top:249px;width:85px;height:33px;background:#fbbfdf"></div>
<svg style="position:absolute;left:74px;top:264px" width="14" height="13" viewBox="0 0 14 13"><path fill="#000" d="M1 0H13V1H14V11H13V12H12V13H10V12H4V13H2V12H1V11H0V1H1Z"/><rect x="2" y="3" width="10" height="5" fill="#fff"/><rect x="3" y="1.4" width="8" height="0.9" fill="#fff" opacity=".65"/><rect x="2" y="9" width="2" height="2" fill="#fff"/><rect x="10" y="9" width="2" height="2" fill="#fff"/></svg>
<div style="left:90px;top:260px;width:64px;height:16px;line-height:16px;text-align:center;white-space:pre;font-size:11px;font-weight:bold;color:#000;letter-spacing:-0.1px">848</div>
<svg style="position:absolute;left:159px;top:264px" width="14" height="13" viewBox="0 0 14 13"><path fill="#000" d="M1 0H13V1H14V11H13V12H12V13H10V12H4V13H2V12H1V11H0V1H1Z"/><rect x="2" y="3" width="10" height="5" fill="#fff"/><rect x="3" y="1.4" width="8" height="0.9" fill="#fff" opacity=".65"/><rect x="2" y="9" width="2" height="2" fill="#fff"/><rect x="10" y="9" width="2" height="2" fill="#fff"/></svg>
<div style="left:175px;top:260px;width:64px;height:16px;line-height:16px;text-align:center;white-space:pre;font-size:11px;font-weight:bold;color:#000;letter-spacing:-0.1px">853</div>
<svg style="position:absolute;left:244px;top:264px" width="14" height="13" viewBox="0 0 14 13"><path fill="#000" d="M1 0H13V1H14V11H13V12H12V13H10V12H4V13H2V12H1V11H0V1H1Z"/><rect x="2" y="3" width="10" height="5" fill="#fff"/><rect x="3" y="1.4" width="8" height="0.9" fill="#fff" opacity=".65"/><rect x="2" y="9" width="2" height="2" fill="#fff"/><rect x="10" y="9" width="2" height="2" fill="#fff"/></svg>
<div style="left:260px;top:260px;width:64px;height:16px;line-height:16px;text-align:center;white-space:pre;font-size:11px;font-weight:bold;color:#000;letter-spacing:-0.1px">860</div>
<svg style="position:absolute;left:329px;top:264px" width="14" height="13" viewBox="0 0 14 13"><path fill="#107878" d="M1 0H13V1H14V11H13V12H12V13H10V12H4V13H2V12H1V11H0V1H1Z"/><rect x="2" y="3" width="10" height="5" fill="#fff"/><rect x="3" y="1.4" width="8" height="0.9" fill="#fff" opacity=".65"/><rect x="2" y="9" width="2" height="2" fill="#fff"/><rect x="10" y="9" width="2" height="2" fill="#fff"/></svg>
<div style="left:345px;top:260px;width:64px;height:16px;line-height:16px;text-align:center;white-space:pre;font-size:11px;font-weight:bold;color:#000;letter-spacing:-0.1px">871</div>
<svg style="position:absolute;left:414px;top:264px" width="14" height="13" viewBox="0 0 14 13"><path fill="#00ffff" d="M1 0H13V1H14V11H13V12H12V13H10V12H4V13H2V12H1V11H0V1H1Z"/><rect x="2" y="3" width="10" height="5" fill="#fff"/><rect x="3" y="1.4" width="8" height="0.9" fill="#fff" opacity=".65"/><rect x="2" y="9" width="2" height="2" fill="#fff"/><rect x="10" y="9" width="2" height="2" fill="#fff"/></svg>
<div style="left:430px;top:260px;width:64px;height:16px;line-height:16px;text-align:center;white-space:pre;font-size:11px;font-weight:bold;color:#000;letter-spacing:-0.1px">223</div>
<div style="left:151px;top:49px;width:1px;height:233px;background:repeating-linear-gradient(180deg,#b0b0b0 0 1px,transparent 1px 2px)"></div>
<div style="left:236px;top:49px;width:1px;height:233px;background:repeating-linear-gradient(180deg,#b0b0b0 0 1px,transparent 1px 2px)"></div>
<div style="left:321px;top:49px;width:1px;height:233px;background:repeating-linear-gradient(180deg,#b0b0b0 0 1px,transparent 1px 2px)"></div>
<div style="left:406px;top:49px;width:1px;height:233px;background:repeating-linear-gradient(180deg,#b0b0b0 0 1px,transparent 1px 2px)"></div>
<div style="left:491px;top:49px;width:1px;height:233px;background:repeating-linear-gradient(180deg,#b0b0b0 0 1px,transparent 1px 2px)"></div>
<div style="left:576px;top:49px;width:1px;height:233px;background:repeating-linear-gradient(180deg,#b0b0b0 0 1px,transparent 1px 2px)"></div>
<div style="left:661px;top:49px;width:1px;height:233px;background:repeating-linear-gradient(180deg,#b0b0b0 0 1px,transparent 1px 2px)"></div>
<div style="left:746px;top:49px;width:1px;height:233px;background:repeating-linear-gradient(180deg,#b0b0b0 0 1px,transparent 1px 2px)"></div>
<div style="left:831px;top:49px;width:1px;height:233px;background:repeating-linear-gradient(180deg,#b0b0b0 0 1px,transparent 1px 2px)"></div>
<div style="left:916px;top:49px;width:1px;height:233px;background:repeating-linear-gradient(180deg,#b0b0b0 0 1px,transparent 1px 2px)"></div>
<div style="left:1001px;top:49px;width:1px;height:233px;background:repeating-linear-gradient(180deg,#b0b0b0 0 1px,transparent 1px 2px)"></div>
<div style="left:1086px;top:49px;width:1px;height:233px;background:repeating-linear-gradient(180deg,#b0b0b0 0 1px,transparent 1px 2px)"></div>
<div style="left:1171px;top:49px;width:1px;height:233px;background:repeating-linear-gradient(180deg,#b0b0b0 0 1px,transparent 1px 2px)"></div>
<div style="left:1256px;top:49px;width:1px;height:233px;background:repeating-linear-gradient(180deg,#b0b0b0 0 1px,transparent 1px 2px)"></div>
<div style="left:31px;top:283px;width:1417px;height:1px;background:#c8c8c8"></div>
<div style="left:31px;top:284px;width:1417px;height:3px;background:#e8e8e8"></div>
<div style="left:31px;top:287px;width:724px;height:500px;background:#f0f0f0;border-top:1px solid #c8c8c8;border-left:1px solid #c8c8c8;border-right:1px solid #c8c8c8;box-sizing:border-box"></div>
<div style="left:33px;top:289px;width:703px;height:498px;background:#fff"></div>
<div style="left:33px;top:289px;width:703px;height:36px;background:#e6e6e6"></div>
<div style="left:33px;top:289px;width:703px;height:1px;background:#a0a0a0"></div>
<div style="left:33px;top:325px;width:703px;height:1px;background:#a0a0a0"></div>
<div style="left:33px;top:289px;width:1px;height:498px;background:#a0a0a0"></div>
<div style="left:54px;top:289px;width:1px;height:36px;background:#a0a0a0"></div>
<div style="left:115px;top:289px;width:1px;height:36px;background:#a0a0a0"></div>
<div style="left:55px;top:289px;width:60px;height:36px;line-height:36px;text-align:center;white-space:pre;font-size:11.5px;color:#333;letter-spacing:-0.05px;-webkit-text-stroke:0.1px">Attribute</div>
<div style="left:236px;top:289px;width:1px;height:36px;background:#a0a0a0"></div>
<div style="left:116px;top:289px;width:120px;height:36px;line-height:36px;text-align:center;white-space:pre;font-size:11.5px;color:#333;letter-spacing:-0.05px;-webkit-text-stroke:0.1px">From Date Time</div>
<div style="left:360px;top:289px;width:1px;height:36px;background:#a0a0a0"></div>
<div style="left:237px;top:289px;width:123px;height:36px;line-height:36px;text-align:center;white-space:pre;font-size:11.5px;color:#333;letter-spacing:-0.05px;-webkit-text-stroke:0.1px">To Date  Time</div>
<div style="left:451px;top:289px;width:1px;height:36px;background:#a0a0a0"></div>
<div style="left:361px;top:289px;width:90px;height:36px;line-height:36px;text-align:center;white-space:pre;font-size:11.5px;color:#333;letter-spacing:-0.05px;-webkit-text-stroke:0.1px">Line List</div>
<div style="left:522px;top:289px;width:1px;height:36px;background:#a0a0a0"></div>
<div style="left:452px;top:289px;width:70px;height:36px;line-height:36px;text-align:center;white-space:pre;font-size:11.5px;color:#333;letter-spacing:-0.05px;-webkit-text-stroke:0.1px">Block Name</div>
<div style="left:581px;top:289px;width:1px;height:36px;background:#a0a0a0"></div>
<div style="left:523px;top:289px;width:58px;height:36px;line-height:36px;text-align:center;white-space:pre;font-size:11.5px;color:#333;letter-spacing:-0.05px;-webkit-text-stroke:0.1px">Bus Type</div>
<div style="left:651px;top:289px;width:1px;height:36px;background:#a0a0a0"></div>
<div style="left:582px;top:294px;width:69px;text-align:center;font-size:11.5px;line-height:12.5px;color:#333">Vehicle<br>Number</div>
<div style="left:736px;top:289px;width:1px;height:36px;background:#a0a0a0"></div>
<div style="left:652px;top:289px;width:84px;height:36px;line-height:36px;text-align:center;white-space:pre;font-size:11.5px;color:#333;letter-spacing:-0.05px;-webkit-text-stroke:0.1px">Work Name</div>
<div style="left:34px;top:326px;width:20px;height:461px;background:#e3e3e3"></div>
<div style="left:54px;top:326px;width:1px;height:461px;background:#a0a0a0"></div>
<div style="left:55px;top:326px;width:681px;height:19px;background:#f0f0f0"></div>
<div style="left:34px;top:326px;width:20px;height:19px;background:#f0f0f0"></div>
<svg style="position:absolute;left:41px;top:330px" width="7" height="12" viewBox="0 0 7 12"><path d="M0 0L6 5.5L0 11Z" fill="#000"/></svg>
<div style="left:34px;top:345px;width:20px;height:1px;background:#a0a0a0"></div>
<div style="left:55px;top:345px;width:681px;height:1px;background:repeating-linear-gradient(90deg,#b0b0b0 0 1px,transparent 1px 2px)"></div>
<svg style="position:absolute;left:58px;top:330px" width="9" height="11" viewBox="0 0 9 11"><path d="M0.5 0.5H5.5L8.5 3.5V9.5H0.5Z" fill="#fff" stroke="#26313c" stroke-width="1.05" stroke-linejoin="round"/><path d="M5.5 0.5V3.5H8.5" fill="none" stroke="#26313c" stroke-width="0.8"/><rect x="2" y="2.8" width="2.6" height="1" rx=".5" fill="#119911"/><rect x="2" y="4.9" width="4.4" height="1" rx=".5" fill="#1aa0e8"/><rect x="2" y="7" width="4.4" height="1" rx=".5" fill="#d0103a"/></svg>
<div style="left:118px;top:325px;height:20px;line-height:20px;text-align:left;white-space:pre;font-size:11px;letter-spacing:-0.1px;-webkit-text-stroke:0.2px;color:#000">02-21-2024 @  4:22a</div>
<div style="left:239px;top:325px;height:20px;line-height:20px;text-align:left;white-space:pre;font-size:11px;letter-spacing:-0.1px;-webkit-text-stroke:0.2px;color:#000">02-22-2024 @ 12:11a</div>
<div style="left:363px;top:325px;height:20px;line-height:20px;text-align:left;white-space:pre;font-size:11px;letter-spacing:-0.1px;-webkit-text-stroke:0.2px;color:#000">4, 7</div>
<div style="left:455px;top:325px;height:20px;line-height:20px;text-align:left;white-space:pre;font-size:11px;letter-spacing:-0.1px;-webkit-text-stroke:0.2px;color:#000">701</div>
<svg style="position:absolute;left:525px;top:329px" width="14" height="13" viewBox="0 0 14 13"><path fill="#1e821e" d="M1 0H13V1H14V11H13V12H12V13H10V12H4V13H2V12H1V11H0V1H1Z"/><rect x="2" y="3" width="10" height="5" fill="#fff"/><rect x="3" y="1.4" width="8" height="0.9" fill="#fff" opacity=".65"/><rect x="2" y="9" width="2" height="2" fill="#fff"/><rect x="10" y="9" width="2" height="2" fill="#fff"/></svg>
<svg style="position:absolute;left:584px;top:329px" width="14" height="13" viewBox="0 0 14 13"><path fill="#000" d="M1 0H13V1H14V11H13V12H12V13H10V12H4V13H2V12H1V11H0V1H1Z"/><rect x="2" y="3" width="10" height="5" fill="#fff"/><rect x="3" y="1.4" width="8" height="0.9" fill="#fff" opacity=".65"/><rect x="2" y="9" width="2" height="2" fill="#fff"/><rect x="10" y="9" width="2" height="2" fill="#fff"/></svg>
<div style="left:600px;top:325px;width:50px;height:20px;line-height:20px;text-align:center;white-space:pre;font-size:11px;font-weight:bold;color:#000;letter-spacing:-0.2px">010</div>
<div style="left:655px;top:325px;height:20px;line-height:20px;text-align:left;white-space:pre;font-size:11px;letter-spacing:-0.1px;-webkit-text-stroke:0.2px;color:#000">7001</div>
<div style="left:34px;top:365px;width:20px;height:1px;background:#a0a0a0"></div>
<div style="left:55px;top:365px;width:681px;height:1px;background:repeating-linear-gradient(90deg,#b0b0b0 0 1px,transparent 1px 2px)"></div>
<svg style="position:absolute;left:58px;top:350px" width="9" height="11" viewBox="0 0 9 11"><path d="M0.5 0.5H5.5L8.5 3.5V9.5H0.5Z" fill="#fff" stroke="#26313c" stroke-width="1.05" stroke-linejoin="round"/><path d="M5.5 0.5V3.5H8.5" fill="none" stroke="#26313c" stroke-width="0.8"/><rect x="2" y="2.8" width="2.6" height="1" rx=".5" fill="#119911"/><rect x="2" y="4.9" width="4.4" height="1" rx=".5" fill="#1aa0e8"/><rect x="2" y="7" width="4.4" height="1" rx=".5" fill="#d0103a"/></svg>
<div style="left:118px;top:345px;height:20px;line-height:20px;text-align:left;white-space:pre;font-size:11px;letter-spacing:-0.1px;-webkit-text-stroke:0.2px;color:#000">02-21-2024 @  4:26a</div>
<div style="left:239px;top:345px;height:20px;line-height:20px;text-align:left;white-space:pre;font-size:11px;letter-spacing:-0.1px;-webkit-text-stroke:0.2px;color:#000">02-22-2024 @ 12:16a</div>
<div style="left:363px;top:345px;height:20px;line-height:20px;text-align:left;white-space:pre;font-size:11px;letter-spacing:-0.1px;-webkit-text-stroke:0.2px;color:#000">10, 15</div>
<div style="left:455px;top:345px;height:20px;line-height:20px;text-align:left;white-space:pre;font-size:11px;letter-spacing:-0.1px;-webkit-text-stroke:0.2px;color:#000">1500</div>
<svg style="position:absolute;left:525px;top:349px" width="14" height="13" viewBox="0 0 14 13"><path fill="#1e821e" d="M1 0H13V1H14V11H13V12H12V13H10V12H4V13H2V12H1V11H0V1H1Z"/><rect x="2" y="3" width="10" height="5" fill="#fff"/><rect x="3" y="1.4" width="8" height="0.9" fill="#fff" opacity=".65"/><rect x="2" y="9" width="2" height="2" fill="#fff"/><rect x="10" y="9" width="2" height="2" fill="#fff"/></svg>
<svg style="position:absolute;left:584px;top:349px" width="14" height="13" viewBox="0 0 14 13"><path fill="#000" d="M1 0H13V1H14V11H13V12H12V13H10V12H4V13H2V12H1V11H0V1H1Z"/><rect x="2" y="3" width="10" height="5" fill="#fff"/><rect x="3" y="1.4" width="8" height="0.9" fill="#fff" opacity=".65"/><rect x="2" y="9" width="2" height="2" fill="#fff"/><rect x="10" y="9" width="2" height="2" fill="#fff"/></svg>
<div style="left:600px;top:345px;width:50px;height:20px;line-height:20px;text-align:center;white-space:pre;font-size:11px;font-weight:bold;color:#000;letter-spacing:-0.2px">135</div>
<div style="left:655px;top:345px;height:20px;line-height:20px;text-align:left;white-space:pre;font-size:11px;letter-spacing:-0.1px;-webkit-text-stroke:0.2px;color:#000">15002</div>
<div style="left:34px;top:385px;width:20px;height:1px;background:#a0a0a0"></div>
<div style="left:55px;top:385px;width:681px;height:1px;background:repeating-linear-gradient(90deg,#b0b0b0 0 1px,transparent 1px 2px)"></div>
<svg style="position:absolute;left:58px;top:370px" width="9" height="11" viewBox="0 0 9 11"><path d="M0.5 0.5H5.5L8.5 3.5V9.5H0.5Z" fill="#fff" stroke="#26313c" stroke-width="1.05" stroke-linejoin="round"/><path d="M5.5 0.5V3.5H8.5" fill="none" stroke="#26313c" stroke-width="0.8"/><rect x="2" y="2.8" width="2.6" height="1" rx=".5" fill="#119911"/><rect x="2" y="4.9" width="4.4" height="1" rx=".5" fill="#1aa0e8"/><rect x="2" y="7" width="4.4" height="1" rx=".5" fill="#d0103a"/></svg>
<div style="left:118px;top:365px;height:20px;line-height:20px;text-align:left;white-space:pre;font-size:11px;letter-spacing:-0.1px;-webkit-text-stroke:0.2px;color:#000">02-21-2024 @  4:48a</div>
<div style="left:239px;top:365px;height:20px;line-height:20px;text-align:left;white-space:pre;font-size:11px;letter-spacing:-0.1px;-webkit-text-stroke:0.2px;color:#000">02-22-2024 @ 12:12a</div>
<div style="left:363px;top:365px;height:20px;line-height:20px;text-align:left;white-space:pre;font-size:11px;letter-spacing:-0.1px;-webkit-text-stroke:0.2px;color:#000">22</div>
<div style="left:455px;top:365px;height:20px;line-height:20px;text-align:left;white-space:pre;font-size:11px;letter-spacing:-0.1px;-webkit-text-stroke:0.2px;color:#000">2200</div>
<svg style="position:absolute;left:525px;top:369px" width="14" height="13" viewBox="0 0 14 13"><path fill="#1e821e" d="M1 0H13V1H14V11H13V12H12V13H10V12H4V13H2V12H1V11H0V1H1Z"/><rect x="2" y="3" width="10" height="5" fill="#fff"/><rect x="3" y="1.4" width="8" height="0.9" fill="#fff" opacity=".65"/><rect x="2" y="9" width="2" height="2" fill="#fff"/><rect x="10" y="9" width="2" height="2" fill="#fff"/></svg>
<svg style="position:absolute;left:584px;top:369px" width="14" height="13" viewBox="0 0 14 13"><path fill="#107878" d="M1 0H13V1H14V11H13V12H12V13H10V12H4V13H2V12H1V11H0V1H1Z"/><rect x="2" y="3" width="10" height="5" fill="#fff"/><rect x="3" y="1.4" width="8" height="0.9" fill="#fff" opacity=".65"/><rect x="2" y="9" width="2" height="2" fill="#fff"/><rect x="10" y="9" width="2" height="2" fill="#fff"/></svg>
<div style="left:600px;top:365px;width:50px;height:20px;line-height:20px;text-align:center;white-space:pre;font-size:11px;font-weight:bold;color:#000;letter-spacing:-0.2px">876</div>
<div style="left:655px;top:365px;height:20px;line-height:20px;text-align:left;white-space:pre;font-size:11px;letter-spacing:-0.1px;-webkit-text-stroke:0.2px;color:#000">22003</div>
<div style="left:34px;top:405px;width:20px;height:1px;background:#a0a0a0"></div>
<div style="left:55px;top:405px;width:681px;height:1px;background:repeating-linear-gradient(90deg,#b0b0b0 0 1px,transparent 1px 2px)"></div>
<svg style="position:absolute;left:58px;top:390px" width="9" height="11" viewBox="0 0 9 11"><path d="M0.5 0.5H5.5L8.5 3.5V9.5H0.5Z" fill="#fff" stroke="#26313c" stroke-width="1.05" stroke-linejoin="round"/><path d="M5.5 0.5V3.5H8.5" fill="none" stroke="#26313c" stroke-width="0.8"/><rect x="2" y="2.8" width="2.6" height="1" rx=".5" fill="#119911"/><rect x="2" y="4.9" width="4.4" height="1" rx=".5" fill="#1aa0e8"/><rect x="2" y="7" width="4.4" height="1" rx=".5" fill="#d0103a"/></svg>
<div style="left:118px;top:385px;height:20px;line-height:20px;text-align:left;white-space:pre;font-size:11px;letter-spacing:-0.1px;-webkit-text-stroke:0.2px;color:#000">02-21-2024 @  4:57a</div>
<div style="left:239px;top:385px;height:20px;line-height:20px;text-align:left;white-space:pre;font-size:11px;letter-spacing:-0.1px;-webkit-text-stroke:0.2px;color:#000">02-22-2024 @ 12:02a</div>
<div style="left:363px;top:385px;height:20px;line-height:20px;text-align:left;white-space:pre;font-size:11px;letter-spacing:-0.1px;-webkit-text-stroke:0.2px;color:#000">26</div>
<div style="left:455px;top:385px;height:20px;line-height:20px;text-align:left;white-space:pre;font-size:11px;letter-spacing:-0.1px;-webkit-text-stroke:0.2px;color:#000">2601</div>
<svg style="position:absolute;left:525px;top:389px" width="14" height="13" viewBox="0 0 14 13"><path fill="#1e821e" d="M1 0H13V1H14V11H13V12H12V13H10V12H4V13H2V12H1V11H0V1H1Z"/><rect x="2" y="3" width="10" height="5" fill="#fff"/><rect x="3" y="1.4" width="8" height="0.9" fill="#fff" opacity=".65"/><rect x="2" y="9" width="2" height="2" fill="#fff"/><rect x="10" y="9" width="2" height="2" fill="#fff"/></svg>
<svg style="position:absolute;left:584px;top:389px" width="14" height="13" viewBox="0 0 14 13"><path fill="#000" d="M1 0H13V1H14V11H13V12H12V13H10V12H4V13H2V12H1V11H0V1H1Z"/><rect x="2" y="3" width="10" height="5" fill="#fff"/><rect x="3" y="1.4" width="8" height="0.9" fill="#fff" opacity=".65"/><rect x="2" y="9" width="2" height="2" fill="#fff"/><rect x="10" y="9" width="2" height="2" fill="#fff"/></svg>
<div style="left:600px;top:385px;width:50px;height:20px;line-height:20px;text-align:center;white-space:pre;font-size:11px;font-weight:bold;color:#000;letter-spacing:-0.2px">261</div>
<div style="left:655px;top:385px;height:20px;line-height:20px;text-align:left;white-space:pre;font-size:11px;letter-spacing:-0.1px;-webkit-text-stroke:0.2px;color:#000">26002</div>
<div style="left:34px;top:425px;width:20px;height:1px;background:#a0a0a0"></div>
<div style="left:55px;top:425px;width:681px;height:1px;background:repeating-linear-gradient(90deg,#b0b0b0 0 1px,transparent 1px 2px)"></div>
<svg style="position:absolute;left:58px;top:410px" width="9" height="11" viewBox="0 0 9 11"><path d="M0.5 0.5H5.5L8.5 3.5V9.5H0.5Z" fill="#fff" stroke="#26313c" stroke-width="1.05" stroke-linejoin="round"/><path d="M5.5 0.5V3.5H8.5" fill="none" stroke="#26313c" stroke-width="0.8"/><rect x="2" y="2.8" width="2.6" height="1" rx=".5" fill="#119911"/><rect x="2" y="4.9" width="4.4" height="1" rx=".5" fill="#1aa0e8"/><rect x="2" y="7" width="4.4" height="1" rx=".5" fill="#d0103a"/></svg>
<div style="left:118px;top:405px;height:20px;line-height:20px;text-align:left;white-space:pre;font-size:11px;letter-spacing:-0.1px;-webkit-text-stroke:0.2px;color:#000">02-21-2024 @  5:01a</div>
<div style="left:239px;top:405px;height:20px;line-height:20px;text-align:left;white-space:pre;font-size:11px;letter-spacing:-0.1px;-webkit-text-stroke:0.2px;color:#000">02-22-2024 @ 12:14a</div>
<div style="left:363px;top:405px;height:20px;line-height:20px;text-align:left;white-space:pre;font-size:11px;letter-spacing:-0.1px;-webkit-text-stroke:0.2px;color:#000">10, 15</div>
<div style="left:455px;top:405px;height:20px;line-height:20px;text-align:left;white-space:pre;font-size:11px;letter-spacing:-0.1px;-webkit-text-stroke:0.2px;color:#000">1504</div>
<svg style="position:absolute;left:525px;top:409px" width="14" height="13" viewBox="0 0 14 13"><path fill="#1e821e" d="M1 0H13V1H14V11H13V12H12V13H10V12H4V13H2V12H1V11H0V1H1Z"/><rect x="2" y="3" width="10" height="5" fill="#fff"/><rect x="3" y="1.4" width="8" height="0.9" fill="#fff" opacity=".65"/><rect x="2" y="9" width="2" height="2" fill="#fff"/><rect x="10" y="9" width="2" height="2" fill="#fff"/></svg>
<svg style="position:absolute;left:584px;top:409px" width="14" height="13" viewBox="0 0 14 13"><path fill="#00ffff" d="M1 0H13V1H14V11H13V12H12V13H10V12H4V13H2V12H1V11H0V1H1Z"/><rect x="2" y="3" width="10" height="5" fill="#fff"/><rect x="3" y="1.4" width="8" height="0.9" fill="#fff" opacity=".65"/><rect x="2" y="9" width="2" height="2" fill="#fff"/><rect x="10" y="9" width="2" height="2" fill="#fff"/></svg>
<div style="left:600px;top:405px;width:50px;height:20px;line-height:20px;text-align:center;white-space:pre;font-size:11px;font-weight:bold;color:#000;letter-spacing:-0.2px">221</div>
<div style="left:655px;top:405px;height:20px;line-height:20px;text-align:left;white-space:pre;font-size:11px;letter-spacing:-0.1px;-webkit-text-stroke:0.2px;color:#000">15004</div>
<div style="left:34px;top:445px;width:20px;height:1px;background:#a0a0a0"></div>
<div style="left:55px;top:445px;width:681px;height:1px;background:repeating-linear-gradient(90deg,#b0b0b0 0 1px,transparent 1px 2px)"></div>
<div style="left:118px;top:425px;height:20px;line-height:20px;text-align:left;white-space:pre;font-size:11px;letter-spacing:-0.1px;-webkit-text-stroke:0.2px;color:#f00000">02-21-2024 @  5:30a</div>
<div style="left:239px;top:425px;height:20px;line-height:20px;text-align:left;white-space:pre;font-size:11px;letter-spacing:-0.1px;-webkit-text-stroke:0.2px;color:#f00000">02-22-2024 @ 12:03a</div>
<div style="left:363px;top:425px;height:20px;line-height:20px;text-align:left;white-space:pre;font-size:11px;letter-spacing:-0.1px;-webkit-text-stroke:0.2px;color:#f00000">20, 30</div>
<div style="left:455px;top:425px;height:20px;line-height:20px;text-align:left;white-space:pre;font-size:11px;letter-spacing:-0.1px;-webkit-text-stroke:0.2px;color:#f00000">3000</div>
<svg style="position:absolute;left:525px;top:429px" width="14" height="13" viewBox="0 0 14 13"><path fill="#a8c4e6" d="M1 0H13V1H14V11H13V12H12V13H10V12H4V13H2V12H1V11H0V1H1Z"/><rect x="2" y="3" width="10" height="5" fill="#fff"/><rect x="3" y="1.4" width="8" height="0.9" fill="#fff" opacity=".65"/><rect x="2" y="9" width="2" height="2" fill="#fff"/><rect x="10" y="9" width="2" height="2" fill="#fff"/></svg>
<div style="left:655px;top:425px;height:20px;line-height:20px;text-align:left;white-space:pre;font-size:11px;letter-spacing:-0.1px;-webkit-text-stroke:0.2px;color:#f00000">30001</div>
<div style="left:34px;top:465px;width:20px;height:1px;background:#a0a0a0"></div>
<div style="left:55px;top:465px;width:681px;height:1px;background:repeating-linear-gradient(90deg,#b0b0b0 0 1px,transparent 1px 2px)"></div>
<div style="left:118px;top:445px;height:20px;line-height:20px;text-align:left;white-space:pre;font-size:11px;letter-spacing:-0.1px;-webkit-text-stroke:0.2px;color:#f00000">02-21-2024 @  5:38a</div>
<div style="left:239px;top:445px;height:20px;line-height:20px;text-align:left;white-space:pre;font-size:11px;letter-spacing:-0.1px;-webkit-text-stroke:0.2px;color:#f00000">02-22-2024 @ 12:17a</div>
<div style="left:363px;top:445px;height:20px;line-height:20px;text-align:left;white-space:pre;font-size:11px;letter-spacing:-0.1px;-webkit-text-stroke:0.2px;color:#f00000">18, 24</div>
<div style="left:455px;top:445px;height:20px;line-height:20px;text-align:left;white-space:pre;font-size:11px;letter-spacing:-0.1px;-webkit-text-stroke:0.2px;color:#f00000">1801</div>
<div style="left:655px;top:445px;height:20px;line-height:20px;text-align:left;white-space:pre;font-size:11px;letter-spacing:-0.1px;-webkit-text-stroke:0.2px;color:#f00000">18002</div>
<div style="left:34px;top:485px;width:20px;height:1px;background:#a0a0a0"></div>
<div style="left:55px;top:485px;width:681px;height:1px;background:repeating-linear-gradient(90deg,#b0b0b0 0 1px,transparent 1px 2px)"></div>
<div style="left:118px;top:465px;height:20px;line-height:20px;text-align:left;white-space:pre;font-size:11px;letter-spacing:-0.1px;-webkit-text-stroke:0.2px;color:#f00000">02-21-2024 @  6:06a</div>
<div style="left:239px;top:465px;height:20px;line-height:20px;text-align:left;white-space:pre;font-size:11px;letter-spacing:-0.1px;-webkit-text-stroke:0.2px;color:#f00000">02-22-2024 @ 12:08a</div>
<div style="left:363px;top:465px;height:20px;line-height:20px;text-align:left;white-space:pre;font-size:11px;letter-spacing:-0.1px;-webkit-text-stroke:0.2px;color:#f00000">4, 6, 9</div>
<div style="left:455px;top:465px;height:20px;line-height:20px;text-align:left;white-space:pre;font-size:11px;letter-spacing:-0.1px;-webkit-text-stroke:0.2px;color:#f00000">603</div>
<svg style="position:absolute;left:525px;top:469px" width="14" height="13" viewBox="0 0 14 13"><path fill="#1e821e" d="M1 0H13V1H14V11H13V12H12V13H10V12H4V13H2V12H1V11H0V1H1Z"/><rect x="2" y="3" width="10" height="5" fill="#fff"/><rect x="3" y="1.4" width="8" height="0.9" fill="#fff" opacity=".65"/><rect x="2" y="9" width="2" height="2" fill="#fff"/><rect x="10" y="9" width="2" height="2" fill="#fff"/></svg>
<div style="left:655px;top:465px;height:20px;line-height:20px;text-align:left;white-space:pre;font-size:11px;letter-spacing:-0.1px;-webkit-text-stroke:0.2px;color:#f00000">106202</div>
<div style="left:34px;top:505px;width:20px;height:1px;background:#a0a0a0"></div>
<div style="left:55px;top:505px;width:681px;height:1px;background:repeating-linear-gradient(90deg,#b0b0b0 0 1px,transparent 1px 2px)"></div>
<div style="left:118px;top:485px;height:20px;line-height:20px;text-align:left;white-space:pre;font-size:11px;letter-spacing:-0.1px;-webkit-text-stroke:0.2px;color:#f00000">02-21-2024 @  6:13a</div>
<div style="left:239px;top:485px;height:20px;line-height:20px;text-align:left;white-space:pre;font-size:11px;letter-spacing:-0.1px;-webkit-text-stroke:0.2px;color:#f00000">02-22-2024 @ 12:26a</div>
<div style="left:363px;top:485px;height:20px;line-height:20px;text-align:left;white-space:pre;font-size:11px;letter-spacing:-0.1px;-webkit-text-stroke:0.2px;color:#f00000">3, 52</div>
<div style="left:455px;top:485px;height:20px;line-height:20px;text-align:left;white-space:pre;font-size:11px;letter-spacing:-0.1px;-webkit-text-stroke:0.2px;color:#f00000">5209</div>
<div style="left:655px;top:485px;height:20px;line-height:20px;text-align:left;white-space:pre;font-size:11px;letter-spacing:-0.1px;-webkit-text-stroke:0.2px;color:#f00000">52007</div>
<div style="left:34px;top:525px;width:20px;height:1px;background:#a0a0a0"></div>
<div style="left:55px;top:525px;width:681px;height:1px;background:repeating-linear-gradient(90deg,#b0b0b0 0 1px,transparent 1px 2px)"></div>
<div style="left:118px;top:505px;height:20px;line-height:20px;text-align:left;white-space:pre;font-size:11px;letter-spacing:-0.1px;-webkit-text-stroke:0.2px;color:#000">02-21-2024 @  2:31p</div>
<div style="left:239px;top:505px;height:20px;line-height:20px;text-align:left;white-space:pre;font-size:11px;letter-spacing:-0.1px;-webkit-text-stroke:0.2px;color:#000">02-22-2024 @ 12:07a</div>
<div style="left:363px;top:505px;height:20px;line-height:20px;text-align:left;white-space:pre;font-size:11px;letter-spacing:-0.1px;-webkit-text-stroke:0.2px;color:#000">19</div>
<div style="left:455px;top:505px;height:20px;line-height:20px;text-align:left;white-space:pre;font-size:11px;letter-spacing:-0.1px;-webkit-text-stroke:0.2px;color:#000">1903</div>
<div style="left:655px;top:505px;height:20px;line-height:20px;text-align:left;white-space:pre;font-size:11px;letter-spacing:-0.1px;-webkit-text-stroke:0.2px;color:#000">19501</div>
<div style="left:34px;top:545px;width:20px;height:1px;background:#a0a0a0"></div>
<div style="left:55px;top:545px;width:681px;height:1px;background:repeating-linear-gradient(90deg,#b0b0b0 0 1px,transparent 1px 2px)"></div>
<div style="left:118px;top:525px;height:20px;line-height:20px;text-align:left;white-space:pre;font-size:11px;letter-spacing:-0.1px;-webkit-text-stroke:0.2px;color:#000">02-21-2024 @  2:59p</div>
<div style="left:239px;top:525px;height:20px;line-height:20px;text-align:left;white-space:pre;font-size:11px;letter-spacing:-0.1px;-webkit-text-stroke:0.2px;color:#000">02-22-2024 @ 12:33a</div>
<div style="left:363px;top:525px;height:20px;line-height:20px;text-align:left;white-space:pre;font-size:11px;letter-spacing:-0.1px;-webkit-text-stroke:0.2px;color:#000">23</div>
<div style="left:455px;top:525px;height:20px;line-height:20px;text-align:left;white-space:pre;font-size:11px;letter-spacing:-0.1px;-webkit-text-stroke:0.2px;color:#000">2306</div>
<svg style="position:absolute;left:525px;top:529px" width="14" height="13" viewBox="0 0 14 13"><path fill="#8c7c1c" d="M1 0H13V1H14V11H13V12H12V13H10V12H4V13H2V12H1V11H0V1H1Z"/><rect x="2" y="3" width="10" height="5" fill="#fff"/><rect x="3" y="1.4" width="8" height="0.9" fill="#fff" opacity=".65"/><rect x="2" y="9" width="2" height="2" fill="#fff"/><rect x="10" y="9" width="2" height="2" fill="#fff"/></svg>
<div style="left:655px;top:525px;height:20px;line-height:20px;text-align:left;white-space:pre;font-size:11px;letter-spacing:-0.1px;-webkit-text-stroke:0.2px;color:#000">23501</div>
<div style="left:34px;top:565px;width:20px;height:1px;background:#a0a0a0"></div>
<div style="left:55px;top:565px;width:681px;height:1px;background:repeating-linear-gradient(90deg,#b0b0b0 0 1px,transparent 1px 2px)"></div>
<div style="left:118px;top:545px;height:20px;line-height:20px;text-align:left;white-space:pre;font-size:11px;letter-spacing:-0.1px;-webkit-text-stroke:0.2px;color:#000">02-21-2024 @  3:22p</div>
<div style="left:239px;top:545px;height:20px;line-height:20px;text-align:left;white-space:pre;font-size:11px;letter-spacing:-0.1px;-webkit-text-stroke:0.2px;color:#000">02-22-2024 @ 12:13a</div>
<div style="left:363px;top:545px;height:20px;line-height:20px;text-align:left;white-space:pre;font-size:11px;letter-spacing:-0.1px;-webkit-text-stroke:0.2px;color:#000">72</div>
<div style="left:455px;top:545px;height:20px;line-height:20px;text-align:left;white-space:pre;font-size:11px;letter-spacing:-0.1px;-webkit-text-stroke:0.2px;color:#000">7203</div>
<svg style="position:absolute;left:525px;top:549px" width="14" height="13" viewBox="0 0 14 13"><path fill="#00ffff" d="M1 0H13V1H14V11H13V12H12V13H10V12H4V13H2V12H1V11H0V1H1Z"/><rect x="2" y="3" width="10" height="5" fill="#fff"/><rect x="3" y="1.4" width="8" height="0.9" fill="#fff" opacity=".65"/><rect x="2" y="9" width="2" height="2" fill="#fff"/><rect x="10" y="9" width="2" height="2" fill="#fff"/></svg>
<div style="left:655px;top:545px;height:20px;line-height:20px;text-align:left;white-space:pre;font-size:11px;letter-spacing:-0.1px;-webkit-text-stroke:0.2px;color:#000">72501</div>
<div style="left:34px;top:585px;width:20px;height:1px;background:#a0a0a0"></div>
<div style="left:55px;top:585px;width:681px;height:1px;background:repeating-linear-gradient(90deg,#b0b0b0 0 1px,transparent 1px 2px)"></div>
<div style="left:118px;top:565px;height:20px;line-height:20px;text-align:left;white-space:pre;font-size:11px;letter-spacing:-0.1px;-webkit-text-stroke:0.2px;color:#000">02-21-2024 @  4:10p</div>
<div style="left:239px;top:565px;height:20px;line-height:20px;text-align:left;white-space:pre;font-size:11px;letter-spacing:-0.1px;-webkit-text-stroke:0.2px;color:#000">02-22-2024 @ 12:00a</div>
<div style="left:363px;top:565px;height:20px;line-height:20px;text-align:left;white-space:pre;font-size:11px;letter-spacing:-0.1px;-webkit-text-stroke:0.2px;color:#000">47</div>
<div style="left:455px;top:565px;height:20px;line-height:20px;text-align:left;white-space:pre;font-size:11px;letter-spacing:-0.1px;-webkit-text-stroke:0.2px;color:#000">47506</div>
<svg style="position:absolute;left:525px;top:569px" width="14" height="13" viewBox="0 0 14 13"><path fill="#000" d="M1 0H13V1H14V11H13V12H12V13H10V12H4V13H2V12H1V11H0V1H1Z"/><rect x="2" y="3" width="10" height="5" fill="#fff"/><rect x="3" y="1.4" width="8" height="0.9" fill="#fff" opacity=".65"/><rect x="2" y="9" width="2" height="2" fill="#fff"/><rect x="10" y="9" width="2" height="2" fill="#fff"/></svg>
<div style="left:655px;top:565px;height:20px;line-height:20px;text-align:left;white-space:pre;font-size:11px;letter-spacing:-0.1px;-webkit-text-stroke:0.2px;color:#000">47506</div>
<div style="left:34px;top:605px;width:20px;height:1px;background:#a0a0a0"></div>
<div style="left:55px;top:605px;width:681px;height:1px;background:repeating-linear-gradient(90deg,#b0b0b0 0 1px,transparent 1px 2px)"></div>
<div style="left:118px;top:585px;height:20px;line-height:20px;text-align:left;white-space:pre;font-size:11px;letter-spacing:-0.1px;-webkit-text-stroke:0.2px;color:#000">02-21-2024 @  4:10p</div>
<div style="left:239px;top:585px;height:20px;line-height:20px;text-align:left;white-space:pre;font-size:11px;letter-spacing:-0.1px;-webkit-text-stroke:0.2px;color:#000">02-22-2024 @ 12:00a</div>
<div style="left:363px;top:585px;height:20px;line-height:20px;text-align:left;white-space:pre;font-size:11px;letter-spacing:-0.1px;-webkit-text-stroke:0.2px;color:#000">47</div>
<div style="left:455px;top:585px;height:20px;line-height:20px;text-align:left;white-space:pre;font-size:11px;letter-spacing:-0.1px;-webkit-text-stroke:0.2px;color:#000">47507</div>
<svg style="position:absolute;left:525px;top:589px" width="14" height="13" viewBox="0 0 14 13"><path fill="#000" d="M1 0H13V1H14V11H13V12H12V13H10V12H4V13H2V12H1V11H0V1H1Z"/><rect x="2" y="3" width="10" height="5" fill="#fff"/><rect x="3" y="1.4" width="8" height="0.9" fill="#fff" opacity=".65"/><rect x="2" y="9" width="2" height="2" fill="#fff"/><rect x="10" y="9" width="2" height="2" fill="#fff"/></svg>
<div style="left:655px;top:585px;height:20px;line-height:20px;text-align:left;white-space:pre;font-size:11px;letter-spacing:-0.1px;-webkit-text-stroke:0.2px;color:#000">47507</div>
<div style="left:34px;top:625px;width:20px;height:1px;background:#a0a0a0"></div>
<div style="left:55px;top:625px;width:681px;height:1px;background:repeating-linear-gradient(90deg,#b0b0b0 0 1px,transparent 1px 2px)"></div>
<div style="left:118px;top:605px;height:20px;line-height:20px;text-align:left;white-space:pre;font-size:11px;letter-spacing:-0.1px;-webkit-text-stroke:0.2px;color:#000">02-22-2024 @  4:01a</div>
<div style="left:239px;top:605px;height:20px;line-height:20px;text-align:left;white-space:pre;font-size:11px;letter-spacing:-0.1px;-webkit-text-stroke:0.2px;color:#000">02-22-2024 @  6:15p</div>
<div style="left:363px;top:605px;height:20px;line-height:20px;text-align:left;white-space:pre;font-size:11px;letter-spacing:-0.1px;-webkit-text-stroke:0.2px;color:#000">10, 15</div>
<div style="left:455px;top:605px;height:20px;line-height:20px;text-align:left;white-space:pre;font-size:11px;letter-spacing:-0.1px;-webkit-text-stroke:0.2px;color:#000">1503</div>
<svg style="position:absolute;left:584px;top:609px" width="14" height="13" viewBox="0 0 14 13"><path fill="#000" d="M1 0H13V1H14V11H13V12H12V13H10V12H4V13H2V12H1V11H0V1H1Z"/><rect x="2" y="3" width="10" height="5" fill="#fff"/><rect x="3" y="1.4" width="8" height="0.9" fill="#fff" opacity=".65"/><rect x="2" y="9" width="2" height="2" fill="#fff"/><rect x="10" y="9" width="2" height="2" fill="#fff"/></svg>
<div style="left:600px;top:605px;width:50px;height:20px;line-height:20px;text-align:center;white-space:pre;font-size:11px;font-weight:bold;color:#000;letter-spacing:-0.2px">020</div>
<div style="left:655px;top:605px;height:20px;line-height:20px;text-align:left;white-space:pre;font-size:11px;letter-spacing:-0.1px;-webkit-text-stroke:0.2px;color:#000">15001</div>
<div style="left:34px;top:645px;width:20px;height:1px;background:#a0a0a0"></div>
<div style="left:55px;top:645px;width:681px;height:1px;background:repeating-linear-gradient(90deg,#b0b0b0 0 1px,transparent 1px 2px)"></div>
<div style="left:118px;top:625px;height:20px;line-height:20px;text-align:left;white-space:pre;font-size:11px;letter-spacing:-0.1px;-webkit-text-stroke:0.2px;color:#f00000">02-22-2024 @  4:08a</div>
<div style="left:239px;top:625px;height:20px;line-height:20px;text-align:left;white-space:pre;font-size:11px;letter-spacing:-0.1px;-webkit-text-stroke:0.2px;color:#f00000">02-22-2024 @  7:02p</div>
<div style="left:363px;top:625px;height:20px;line-height:20px;text-align:left;white-space:pre;font-size:11px;letter-spacing:-0.1px;-webkit-text-stroke:0.2px;color:#f00000">23, 33, 43</div>
<div style="left:455px;top:625px;height:20px;line-height:20px;text-align:left;white-space:pre;font-size:11px;letter-spacing:-0.1px;-webkit-text-stroke:0.2px;color:#f00000">2300</div>
<svg style="position:absolute;left:525px;top:629px" width="14" height="13" viewBox="0 0 14 13"><path fill="#8c7c1c" d="M1 0H13V1H14V11H13V12H12V13H10V12H4V13H2V12H1V11H0V1H1Z"/><rect x="2" y="3" width="10" height="5" fill="#fff"/><rect x="3" y="1.4" width="8" height="0.9" fill="#fff" opacity=".65"/><rect x="2" y="9" width="2" height="2" fill="#fff"/><rect x="10" y="9" width="2" height="2" fill="#fff"/></svg>
<div style="left:655px;top:625px;height:20px;line-height:20px;text-align:left;white-space:pre;font-size:11px;letter-spacing:-0.1px;-webkit-text-stroke:0.2px;color:#f00000">23001</div>
<div style="left:34px;top:665px;width:20px;height:1px;background:#a0a0a0"></div>
<div style="left:55px;top:665px;width:681px;height:1px;background:repeating-linear-gradient(90deg,#b0b0b0 0 1px,transparent 1px 2px)"></div>
<div style="left:118px;top:645px;height:20px;line-height:20px;text-align:left;white-space:pre;font-size:11px;letter-spacing:-0.1px;-webkit-text-stroke:0.2px;color:#f00000">02-22-2024 @  4:08a</div>
<div style="left:239px;top:645px;height:20px;line-height:20px;text-align:left;white-space:pre;font-size:11px;letter-spacing:-0.1px;-webkit-text-stroke:0.2px;color:#f00000">02-22-2024 @  7:28p</div>
<div style="left:363px;top:645px;height:20px;line-height:20px;text-align:left;white-space:pre;font-size:11px;letter-spacing:-0.1px;-webkit-text-stroke:0.2px;color:#f00000">52</div>
<div style="left:455px;top:645px;height:20px;line-height:20px;text-align:left;white-space:pre;font-size:11px;letter-spacing:-0.1px;-webkit-text-stroke:0.2px;color:#f00000">5200</div>
<div style="left:655px;top:645px;height:20px;line-height:20px;text-align:left;white-space:pre;font-size:11px;letter-spacing:-0.1px;-webkit-text-stroke:0.2px;color:#f00000">52001</div>
<div style="left:34px;top:685px;width:20px;height:1px;background:#a0a0a0"></div>
<div style="left:55px;top:685px;width:681px;height:1px;background:repeating-linear-gradient(90deg,#b0b0b0 0 1px,transparent 1px 2px)"></div>
<div style="left:118px;top:665px;height:20px;line-height:20px;text-align:left;white-space:pre;font-size:11px;letter-spacing:-0.1px;-webkit-text-stroke:0.2px;color:#f00000">02-22-2024 @  4:13a</div>
<div style="left:239px;top:665px;height:20px;line-height:20px;text-align:left;white-space:pre;font-size:11px;letter-spacing:-0.1px;-webkit-text-stroke:0.2px;color:#f00000">02-22-2024 @  6:28p</div>
<div style="left:363px;top:665px;height:20px;line-height:20px;text-align:left;white-space:pre;font-size:11px;letter-spacing:-0.1px;-webkit-text-stroke:0.2px;color:#f00000">22</div>
<div style="left:455px;top:665px;height:20px;line-height:20px;text-align:left;white-space:pre;font-size:11px;letter-spacing:-0.1px;-webkit-text-stroke:0.2px;color:#f00000">2204</div>
<div style="left:655px;top:665px;height:20px;line-height:20px;text-align:left;white-space:pre;font-size:11px;letter-spacing:-0.1px;-webkit-text-stroke:0.2px;color:#f00000">22001</div>
<div style="left:34px;top:705px;width:20px;height:1px;background:#a0a0a0"></div>
<div style="left:55px;top:705px;width:681px;height:1px;background:repeating-linear-gradient(90deg,#b0b0b0 0 1px,transparent 1px 2px)"></div>
<div style="left:118px;top:685px;height:20px;line-height:20px;text-align:left;white-space:pre;font-size:11px;letter-spacing:-0.1px;-webkit-text-stroke:0.2px;color:#f00000">02-22-2024 @  4:22a</div>
<div style="left:239px;top:685px;height:20px;line-height:20px;text-align:left;white-space:pre;font-size:11px;letter-spacing:-0.1px;-webkit-text-stroke:0.2px;color:#f00000">02-22-2024 @  6:30p</div>
<div style="left:363px;top:685px;height:20px;line-height:20px;text-align:left;white-space:pre;font-size:11px;letter-spacing:-0.1px;-webkit-text-stroke:0.2px;color:#f00000">6, 9, 24</div>
<div style="left:455px;top:685px;height:20px;line-height:20px;text-align:left;white-space:pre;font-size:11px;letter-spacing:-0.1px;-webkit-text-stroke:0.2px;color:#f00000">  900</div>
<div style="left:655px;top:685px;height:20px;line-height:20px;text-align:left;white-space:pre;font-size:11px;letter-spacing:-0.1px;-webkit-text-stroke:0.2px;color:#f00000">9001</div>
<div style="left:34px;top:725px;width:20px;height:1px;background:#a0a0a0"></div>
<div style="left:55px;top:725px;width:681px;height:1px;background:repeating-linear-gradient(90deg,#b0b0b0 0 1px,transparent 1px 2px)"></div>
<div style="left:118px;top:705px;height:20px;line-height:20px;text-align:left;white-space:pre;font-size:11px;letter-spacing:-0.1px;-webkit-text-stroke:0.2px;color:#f00000">02-22-2024 @  4:22a</div>
<div style="left:239px;top:705px;height:20px;line-height:20px;text-align:left;white-space:pre;font-size:11px;letter-spacing:-0.1px;-webkit-text-stroke:0.2px;color:#f00000">02-23-2024 @ 12:11a</div>
<div style="left:363px;top:705px;height:20px;line-height:20px;text-align:left;white-space:pre;font-size:11px;letter-spacing:-0.1px;-webkit-text-stroke:0.2px;color:#f00000">4, 7</div>
<div style="left:455px;top:705px;height:20px;line-height:20px;text-align:left;white-space:pre;font-size:11px;letter-spacing:-0.1px;-webkit-text-stroke:0.2px;color:#f00000">701</div>
<svg style="position:absolute;left:525px;top:709px" width="14" height="13" viewBox="0 0 14 13"><path fill="#1e821e" d="M1 0H13V1H14V11H13V12H12V13H10V12H4V13H2V12H1V11H0V1H1Z"/><rect x="2" y="3" width="10" height="5" fill="#fff"/><rect x="3" y="1.4" width="8" height="0.9" fill="#fff" opacity=".65"/><rect x="2" y="9" width="2" height="2" fill="#fff"/><rect x="10" y="9" width="2" height="2" fill="#fff"/></svg>
<div style="left:655px;top:705px;height:20px;line-height:20px;text-align:left;white-space:pre;font-size:11px;letter-spacing:-0.1px;-webkit-text-stroke:0.2px;color:#f00000">7001</div>
<div style="left:34px;top:745px;width:20px;height:1px;background:#a0a0a0"></div>
<div style="left:55px;top:745px;width:681px;height:1px;background:repeating-linear-gradient(90deg,#b0b0b0 0 1px,transparent 1px 2px)"></div>
<div style="left:118px;top:725px;height:20px;line-height:20px;text-align:left;white-space:pre;font-size:11px;letter-spacing:-0.1px;-webkit-text-stroke:0.2px;color:#f00000">02-22-2024 @  4:25a</div>
<div style="left:239px;top:725px;height:20px;line-height:20px;text-align:left;white-space:pre;font-size:11px;letter-spacing:-0.1px;-webkit-text-stroke:0.2px;color:#f00000">02-22-2024 @  6:13p</div>
<div style="left:363px;top:725px;height:20px;line-height:20px;text-align:left;white-space:pre;font-size:11px;letter-spacing:-0.1px;-webkit-text-stroke:0.2px;color:#f00000">26</div>
<div style="left:455px;top:725px;height:20px;line-height:20px;text-align:left;white-space:pre;font-size:11px;letter-spacing:-0.1px;-webkit-text-stroke:0.2px;color:#f00000">2600</div>
<div style="left:655px;top:725px;height:20px;line-height:20px;text-align:left;white-space:pre;font-size:11px;letter-spacing:-0.1px;-webkit-text-stroke:0.2px;color:#f00000">26001</div>
<div style="left:34px;top:765px;width:20px;height:1px;background:#a0a0a0"></div>
<div style="left:55px;top:765px;width:681px;height:1px;background:repeating-linear-gradient(90deg,#b0b0b0 0 1px,transparent 1px 2px)"></div>
<div style="left:118px;top:745px;height:20px;line-height:20px;text-align:left;white-space:pre;font-size:11px;letter-spacing:-0.1px;-webkit-text-stroke:0.2px;color:#f00000">02-22-2024 @  4:26a</div>
<div style="left:239px;top:745px;height:20px;line-height:20px;text-align:left;white-space:pre;font-size:11px;letter-spacing:-0.1px;-webkit-text-stroke:0.2px;color:#f00000">02-23-2024 @ 12:16a</div>
<div style="left:363px;top:745px;height:20px;line-height:20px;text-align:left;white-space:pre;font-size:11px;letter-spacing:-0.1px;-webkit-text-stroke:0.2px;color:#f00000">10, 15</div>
<div style="left:455px;top:745px;height:20px;line-height:20px;text-align:left;white-space:pre;font-size:11px;letter-spacing:-0.1px;-webkit-text-stroke:0.2px;color:#f00000">1500</div>
<svg style="position:absolute;left:525px;top:749px" width="14" height="13" viewBox="0 0 14 13"><path fill="#1e821e" d="M1 0H13V1H14V11H13V12H12V13H10V12H4V13H2V12H1V11H0V1H1Z"/><rect x="2" y="3" width="10" height="5" fill="#fff"/><rect x="3" y="1.4" width="8" height="0.9" fill="#fff" opacity=".65"/><rect x="2" y="9" width="2" height="2" fill="#fff"/><rect x="10" y="9" width="2" height="2" fill="#fff"/></svg>
<div style="left:655px;top:745px;height:20px;line-height:20px;text-align:left;white-space:pre;font-size:11px;letter-spacing:-0.1px;-webkit-text-stroke:0.2px;color:#f00000">15002</div>
<div style="left:34px;top:785px;width:20px;height:1px;background:#a0a0a0"></div>
<div style="left:55px;top:785px;width:681px;height:1px;background:repeating-linear-gradient(90deg,#b0b0b0 0 1px,transparent 1px 2px)"></div>
<div style="left:118px;top:765px;height:20px;line-height:20px;text-align:left;white-space:pre;font-size:11px;letter-spacing:-0.1px;-webkit-text-stroke:0.2px;color:#f00000">02-22-2024 @  4:26a</div>
<div style="left:239px;top:765px;height:20px;line-height:20px;text-align:left;white-space:pre;font-size:11px;letter-spacing:-0.1px;-webkit-text-stroke:0.2px;color:#f00000">02-22-2024 @  7:12p</div>
<div style="left:363px;top:765px;height:20px;line-height:20px;text-align:left;white-space:pre;font-size:11px;letter-spacing:-0.1px;-webkit-text-stroke:0.2px;color:#f00000">23, 43</div>
<div style="left:455px;top:765px;height:20px;line-height:20px;text-align:left;white-space:pre;font-size:11px;letter-spacing:-0.1px;-webkit-text-stroke:0.2px;color:#f00000">2301</div>
<svg style="position:absolute;left:525px;top:769px" width="14" height="13" viewBox="0 0 14 13"><path fill="#8c7c1c" d="M1 0H13V1H14V11H13V12H12V13H10V12H4V13H2V12H1V11H0V1H1Z"/><rect x="2" y="3" width="10" height="5" fill="#fff"/><rect x="3" y="1.4" width="8" height="0.9" fill="#fff" opacity=".65"/><rect x="2" y="9" width="2" height="2" fill="#fff"/><rect x="10" y="9" width="2" height="2" fill="#fff"/></svg>
<div style="left:655px;top:765px;height:20px;line-height:20px;text-align:left;white-space:pre;font-size:11px;letter-spacing:-0.1px;-webkit-text-stroke:0.2px;color:#f00000">23002</div>
<div style="left:115px;top:326px;width:1px;height:461px;background:repeating-linear-gradient(180deg,#b0b0b0 0 1px,transparent 1px 2px)"></div>
<div style="left:236px;top:326px;width:1px;height:461px;background:repeating-linear-gradient(180deg,#b0b0b0 0 1px,transparent 1px 2px)"></div>
<div style="left:360px;top:326px;width:1px;height:461px;background:repeating-linear-gradient(180deg,#b0b0b0 0 1px,transparent 1px 2px)"></div>
<div style="left:451px;top:326px;width:1px;height:461px;background:repeating-linear-gradient(180deg,#b0b0b0 0 1px,transparent 1px 2px)"></div>
<div style="left:522px;top:326px;width:1px;height:461px;background:repeating-linear-gradient(180deg,#b0b0b0 0 1px,transparent 1px 2px)"></div>
<div style="left:581px;top:326px;width:1px;height:461px;background:repeating-linear-gradient(180deg,#b0b0b0 0 1px,transparent 1px 2px)"></div>
<div style="left:651px;top:326px;width:1px;height:461px;background:repeating-linear-gradient(180deg,#b0b0b0 0 1px,transparent 1px 2px)"></div>
<div style="left:736px;top:289px;width:17px;height:498px;background:#f0f0f0"></div>
<div style="left:737px;top:305px;width:15px;height:44px;background:#cdcdcd"></div>
<svg style="position:absolute;left:739px;top:292px" width="11" height="8" viewBox="0 0 11 8"><path d="M1.5 6.5L5.5 2.5L9.5 6.5" fill="none" stroke="#505050" stroke-width="1.6"/></svg>
<div style="left:758px;top:287px;width:690px;height:500px;background:#fcfcfc;border-top:1px solid #c8c8c8;border-left:1px solid #c8c8c8;box-sizing:border-box"></div>
<div style="left:779px;top:309px;width:661px;height:116px;border:1px solid #a8a8a8;box-sizing:border-box"></div>
<div style="left:795px;top:306px;width:75px;height:6px;background:#fcfcfc"></div>
<div style="left:798px;top:301px;height:16px;line-height:16px;text-align:left;white-space:pre;font-size:11.1px;color:#3c3c3c;-webkit-text-stroke:0.15px;color:#3c3c3c">Block Details</div>
<div style="left:588px;top:321px;width:300px;height:17px;line-height:17px;text-align:right;white-space:pre;font-size:11.1px;color:#3c3c3c;-webkit-text-stroke:0.15px;">Line Group Abbr:</div>
<div style="left:895px;top:320px;width:96px;height:18px;background:#fff;border:1px solid #a0a0a0;box-sizing:border-box"></div>
<div style="left:899px;top:320px;height:18px;line-height:18px;text-align:left;white-space:pre;font-size:11px;color:#000;-webkit-text-stroke:0.2px;"> 7</div>
<div style="left:762px;top:321px;width:300px;height:17px;line-height:17px;text-align:right;white-space:pre;font-size:11.1px;color:#3c3c3c;-webkit-text-stroke:0.15px;">Block Name:</div>
<div style="left:1070px;top:320px;width:68px;height:18px;background:#fff;border:1px solid #a0a0a0;box-sizing:border-box"></div>
<div style="left:1074px;top:320px;height:18px;line-height:18px;text-align:left;white-space:pre;font-size:11px;color:#000;-webkit-text-stroke:0.2px;">701</div>
<div style="left:989px;top:321px;width:300px;height:17px;line-height:17px;text-align:right;white-space:pre;font-size:11.1px;color:#3c3c3c;-webkit-text-stroke:0.15px;">Cancel Service Reason:</div>
<div style="left:1296px;top:320px;width:134px;height:18px;background:#fff;border:1px solid #a0a0a0;box-sizing:border-box"></div>
<div style="left:588px;top:345px;width:300px;height:17px;line-height:17px;text-align:right;white-space:pre;font-size:11.1px;color:#3c3c3c;-webkit-text-stroke:0.15px;">Line List:</div>
<div style="left:895px;top:344px;width:96px;height:17px;background:#fff;border:1px solid #a0a0a0;box-sizing:border-box"></div>
<div style="left:899px;top:344px;height:17px;line-height:17px;text-align:left;white-space:pre;font-size:11px;color:#000;-webkit-text-stroke:0.2px;">4, 7</div>
<div style="left:766px;top:345px;width:300px;height:17px;line-height:17px;text-align:right;white-space:pre;font-size:11.1px;color:#3c3c3c;-webkit-text-stroke:0.15px;">Work Type:</div>
<div style="left:1072px;top:344px;width:130px;height:17px;background:#fff;border:1px solid #a0a0a0;box-sizing:border-box"></div>
<div style="left:1076px;top:344px;height:17px;line-height:17px;text-align:left;white-space:pre;font-size:11px;color:#000;-webkit-text-stroke:0.2px;">Run</div>
<div style="left:989px;top:345px;width:300px;height:17px;line-height:17px;text-align:right;white-space:pre;font-size:11.1px;color:#3c3c3c;-webkit-text-stroke:0.15px;">Attribute:</div>
<div style="left:1297px;top:344px;width:131px;height:17px;background:#fff;border:1px solid #a0a0a0;box-sizing:border-box"></div>
<svg style="position:absolute;left:1301px;top:347px" width="9" height="11" viewBox="0 0 9 11"><path d="M0.5 0.5H5.5L8.5 3.5V9.5H0.5Z" fill="#fff" stroke="#26313c" stroke-width="1.05" stroke-linejoin="round"/><path d="M5.5 0.5V3.5H8.5" fill="none" stroke="#26313c" stroke-width="0.8"/><rect x="2" y="2.8" width="2.6" height="1" rx=".5" fill="#119911"/><rect x="2" y="4.9" width="4.4" height="1" rx=".5" fill="#1aa0e8"/><rect x="2" y="7" width="4.4" height="1" rx=".5" fill="#d0103a"/></svg>
<div style="left:588px;top:382px;width:300px;height:17px;line-height:17px;text-align:right;white-space:pre;font-size:11.1px;color:#3c3c3c;-webkit-text-stroke:0.15px;">From Date Time:</div>
<div style="left:895px;top:381px;width:160px;height:17px;background:#fff;border:1px solid #a0a0a0;box-sizing:border-box"></div>
<div style="left:899px;top:381px;height:17px;line-height:17px;text-align:left;white-space:pre;font-size:11px;color:#000;-webkit-text-stroke:0.2px;">02-21-2024 @  4:22a</div>
<div style="left:825px;top:382px;width:300px;height:17px;line-height:17px;text-align:right;white-space:pre;font-size:11.1px;color:#3c3c3c;-webkit-text-stroke:0.15px;">Act. From:</div>
<div style="left:1132px;top:381px;width:84px;height:17px;background:#fff;border:1px solid #a0a0a0;box-sizing:border-box"></div>
<div style="left:1132px;top:381px;width:79px;height:17px;line-height:17px;text-align:right;white-space:pre;font-size:11px;color:#000;-webkit-text-stroke:0.2px;">4:22a</div>
<div style="left:1024px;top:382px;width:300px;height:17px;line-height:17px;text-align:right;white-space:pre;font-size:11.1px;color:#3c3c3c;-webkit-text-stroke:0.15px;">From Location:</div>
<div style="left:1331px;top:381px;width:98px;height:17px;background:#fff;border:1px solid #a0a0a0;box-sizing:border-box"></div>
<div style="left:1335px;top:381px;height:17px;line-height:17px;text-align:left;white-space:pre;font-size:11px;color:#000;-webkit-text-stroke:0.2px;">GAR</div>
<div style="left:588px;top:404px;width:300px;height:17px;line-height:17px;text-align:right;white-space:pre;font-size:11.1px;color:#3c3c3c;-webkit-text-stroke:0.15px;">To Date  Time:</div>
<div style="left:895px;top:403px;width:160px;height:18px;background:#fff;border:1px solid #a0a0a0;box-sizing:border-box"></div>
<div style="left:899px;top:403px;height:18px;line-height:18px;text-align:left;white-space:pre;font-size:11px;color:#000;-webkit-text-stroke:0.2px;">02-22-2024 @ 12:11a</div>
<div style="left:825px;top:404px;width:300px;height:17px;line-height:17px;text-align:right;white-space:pre;font-size:11.1px;color:#3c3c3c;-webkit-text-stroke:0.15px;">Act. To:</div>
<div style="left:1132px;top:403px;width:84px;height:18px;background:#fff;border:1px solid #a0a0a0;box-sizing:border-box"></div>
<div style="left:1132px;top:403px;width:79px;height:18px;line-height:18px;text-align:right;white-space:pre;font-size:11px;color:#000;-webkit-text-stroke:0.2px;">12:11x</div>
<div style="left:1024px;top:404px;width:300px;height:17px;line-height:17px;text-align:right;white-space:pre;font-size:11.1px;color:#3c3c3c;-webkit-text-stroke:0.15px;">To Location:</div>
<div style="left:1331px;top:403px;width:98px;height:18px;background:#fff;border:1px solid #a0a0a0;box-sizing:border-box"></div>
<div style="left:1335px;top:403px;height:18px;line-height:18px;text-align:left;white-space:pre;font-size:11px;color:#000;-webkit-text-stroke:0.2px;">GAR</div>
<div style="left:780px;top:435px;width:660px;height:116px;border:1px solid #a8a8a8;box-sizing:border-box"></div>
<div style="left:787px;top:432px;width:115px;height:6px;background:#fcfcfc"></div>
<div style="left:789px;top:427px;height:16px;line-height:16px;text-align:left;white-space:pre;font-size:11.1px;color:#3c3c3c;-webkit-text-stroke:0.15px;color:#3c3c3c">Block Characteristics</div>
<div style="left:643px;top:443px;width:300px;height:17px;line-height:17px;text-align:right;white-space:pre;font-size:11.1px;color:#3c3c3c;-webkit-text-stroke:0.15px;">Vehicle Number:</div>
<div style="left:951px;top:442px;width:90px;height:23px;background:#fff;border:1px solid #a0a0a0;box-sizing:border-box"></div>
<svg style="position:absolute;left:955px;top:447px" width="14" height="13" viewBox="0 0 14 13"><path fill="#000" d="M1 0H13V1H14V11H13V12H12V13H10V12H4V13H2V12H1V11H0V1H1Z"/><rect x="2" y="3" width="10" height="5" fill="#fff"/><rect x="3" y="1.4" width="8" height="0.9" fill="#fff" opacity=".65"/><rect x="2" y="9" width="2" height="2" fill="#fff"/><rect x="10" y="9" width="2" height="2" fill="#fff"/></svg>
<div style="left:980px;top:442px;width:50px;height:23px;line-height:23px;text-align:center;white-space:pre;font-size:11px;font-weight:bold;color:#000">010</div>
<div style="left:991px;top:443px;width:300px;height:17px;line-height:17px;text-align:right;white-space:pre;font-size:11.1px;color:#3c3c3c;-webkit-text-stroke:0.15px;">Bus Type:</div>
<div style="left:1298px;top:442px;width:135px;height:17px;background:#fff;border:1px solid #a0a0a0;box-sizing:border-box"></div>
<div style="left:1302px;top:442px;height:17px;line-height:17px;text-align:left;white-space:pre;font-size:11px;color:#000;-webkit-text-stroke:0.2px;">BN</div>
<div style="left:991px;top:463px;width:300px;height:17px;line-height:17px;text-align:right;white-space:pre;font-size:11.1px;color:#3c3c3c;-webkit-text-stroke:0.15px;">Vehicle Assign Type:</div>
<div style="left:1298px;top:462px;width:135px;height:18px;background:#fff;border:1px solid #a0a0a0;box-sizing:border-box"></div>
<div style="left:1302px;top:462px;height:18px;line-height:18px;text-align:left;white-space:pre;font-size:11px;color:#000;-webkit-text-stroke:0.2px;">AutoAssign</div>
<div style="left:643px;top:485px;width:300px;height:17px;line-height:17px;text-align:right;white-space:pre;font-size:11.1px;color:#3c3c3c;-webkit-text-stroke:0.15px;">Parking Description:</div>
<div style="left:951px;top:484px;width:486px;height:17px;background:#fff;border:1px solid #a0a0a0;box-sizing:border-box"></div>
<div style="left:955px;top:484px;height:17px;line-height:17px;text-align:left;white-space:pre;font-size:11px;color:#000;-webkit-text-stroke:0.2px;">Row:1 Column:2nd Bus</div>
<div style="left:643px;top:506px;width:300px;height:17px;line-height:17px;text-align:right;white-space:pre;font-size:11.1px;color:#3c3c3c;-webkit-text-stroke:0.15px;">Required Characteristics:</div>
<div style="left:951px;top:505px;width:486px;height:18px;background:#fff;border:1px solid #a0a0a0;box-sizing:border-box"></div>
<div style="left:643px;top:528px;width:300px;height:17px;line-height:17px;text-align:right;white-space:pre;font-size:11.1px;color:#3c3c3c;-webkit-text-stroke:0.15px;">Optional Characteristics:</div>
<div style="left:951px;top:527px;width:486px;height:17px;background:#fff;border:1px solid #a0a0a0;box-sizing:border-box"></div>
<div style="left:779px;top:565px;width:662px;height:127px;border:1px solid #a8a8a8;box-sizing:border-box"></div>
<div style="left:791px;top:562px;width:85px;height:6px;background:#fcfcfc"></div>
<div style="left:793px;top:557px;height:16px;line-height:16px;text-align:left;white-space:pre;font-size:11.1px;color:#3c3c3c;-webkit-text-stroke:0.15px;color:#3c3c3c">Time and Miles</div>
<div style="left:645px;top:574px;width:300px;height:17px;line-height:17px;text-align:right;white-space:pre;font-size:11.1px;color:#3c3c3c;-webkit-text-stroke:0.15px;">Non Revenue Miles:</div>
<div style="left:953px;top:573px;width:72px;height:17px;background:#fff;border:1px solid #a0a0a0;box-sizing:border-box"></div>
<div style="left:957px;top:573px;height:17px;line-height:17px;text-align:left;white-space:pre;font-size:11px;color:#000;-webkit-text-stroke:0.2px;">6.0mi</div>
<div style="left:645px;top:597px;width:300px;height:17px;line-height:17px;text-align:right;white-space:pre;font-size:11.1px;color:#3c3c3c;-webkit-text-stroke:0.15px;">Revenue Miles:</div>
<div style="left:954px;top:596px;width:72px;height:17px;background:#fff;border:1px solid #a0a0a0;box-sizing:border-box"></div>
<div style="left:958px;top:596px;height:17px;line-height:17px;text-align:left;white-space:pre;font-size:11px;color:#000;-webkit-text-stroke:0.2px;">161.028mi</div>
<div style="left:645px;top:619px;width:300px;height:17px;line-height:17px;text-align:right;white-space:pre;font-size:11.1px;color:#3c3c3c;-webkit-text-stroke:0.15px;">Block Mileage:</div>
<div style="left:954px;top:618px;width:72px;height:17px;background:#fff;border:1px solid #a0a0a0;box-sizing:border-box"></div>
<div style="left:958px;top:618px;height:17px;line-height:17px;text-align:left;white-space:pre;font-size:11px;color:#000;-webkit-text-stroke:0.2px;">167.028mi</div>
<div style="left:647px;top:646px;width:300px;height:17px;line-height:17px;text-align:right;white-space:pre;font-size:11.1px;color:#3c3c3c;-webkit-text-stroke:0.15px;">Non Revenue Time:</div>
<div style="left:954px;top:645px;width:72px;height:18px;background:#fff;border:1px solid #a0a0a0;box-sizing:border-box"></div>
<div style="left:954px;top:645px;width:67px;height:18px;line-height:18px;text-align:right;white-space:pre;font-size:11px;color:#000;-webkit-text-stroke:0.2px;">5h19</div>
<div style="left:648px;top:670px;width:300px;height:17px;line-height:17px;text-align:right;white-space:pre;font-size:11.1px;color:#3c3c3c;-webkit-text-stroke:0.15px;">Revenue Time:</div>
<div style="left:955px;top:669px;width:72px;height:17px;background:#fff;border:1px solid #a0a0a0;box-sizing:border-box"></div>
<div style="left:955px;top:669px;width:67px;height:17px;line-height:17px;text-align:right;white-space:pre;font-size:11px;color:#000;-webkit-text-stroke:0.2px;">14h30</div>
<div style="left:894px;top:574px;width:300px;height:17px;line-height:17px;text-align:right;white-space:pre;font-size:11.1px;color:#3c3c3c;-webkit-text-stroke:0.15px;">Act Non Revenue  Miles:</div>
<div style="left:1201px;top:573px;width:72px;height:17px;background:#fff;border:1px solid #a0a0a0;box-sizing:border-box"></div>
<div style="left:1205px;top:573px;height:17px;line-height:17px;text-align:left;white-space:pre;font-size:11px;color:#000;-webkit-text-stroke:0.2px;">6.0mi</div>
<div style="left:895px;top:597px;width:300px;height:17px;line-height:17px;text-align:right;white-space:pre;font-size:11.1px;color:#3c3c3c;-webkit-text-stroke:0.15px;">Act Revenue Miles:</div>
<div style="left:1202px;top:596px;width:72px;height:17px;background:#fff;border:1px solid #a0a0a0;box-sizing:border-box"></div>
<div style="left:1206px;top:596px;height:17px;line-height:17px;text-align:left;white-space:pre;font-size:11px;color:#000;-webkit-text-stroke:0.2px;">161.028mi</div>
<div style="left:896px;top:646px;width:300px;height:17px;line-height:17px;text-align:right;white-space:pre;font-size:11.1px;color:#3c3c3c;-webkit-text-stroke:0.15px;">Act Non Revenue Time:</div>
<div style="left:1203px;top:645px;width:72px;height:18px;background:#fff;border:1px solid #a0a0a0;box-sizing:border-box"></div>
<div style="left:1203px;top:645px;width:67px;height:18px;line-height:18px;text-align:right;white-space:pre;font-size:11px;color:#000;-webkit-text-stroke:0.2px;">5h19</div>
<div style="left:896px;top:670px;width:300px;height:17px;line-height:17px;text-align:right;white-space:pre;font-size:11.1px;color:#3c3c3c;-webkit-text-stroke:0.15px;">Act Revenue Time:</div>
<div style="left:1203px;top:669px;width:72px;height:17px;background:#fff;border:1px solid #a0a0a0;box-sizing:border-box"></div>
<div style="left:1203px;top:669px;width:67px;height:17px;line-height:17px;text-align:right;white-space:pre;font-size:11px;color:#000;-webkit-text-stroke:0.2px;">14h30</div>
<div style="left:548px;top:703px;width:300px;height:17px;line-height:17px;text-align:right;white-space:pre;font-size:11.1px;color:#3c3c3c;-webkit-text-stroke:0.15px;">Comments:</div>
<div style="left:855px;top:702px;width:585px;height:44px;background:#fff;border:1px solid #a0a0a0;box-sizing:border-box"></div>
<div style="left:550px;top:758px;width:300px;height:17px;line-height:17px;text-align:right;white-space:pre;font-size:11.1px;color:#3c3c3c;-webkit-text-stroke:0.15px;">Audit:</div>
<div style="left:857px;top:757px;width:585px;height:17px;background:#fff;border:1px solid #a0a0a0;box-sizing:border-box"></div>
<div style="left:861px;top:757px;height:17px;line-height:17px;text-align:left;white-space:pre;font-size:11px;color:#000;-webkit-text-stroke:0.2px;">Admin on 02-21-2024 @  7:39a+</div>
</body></html>
